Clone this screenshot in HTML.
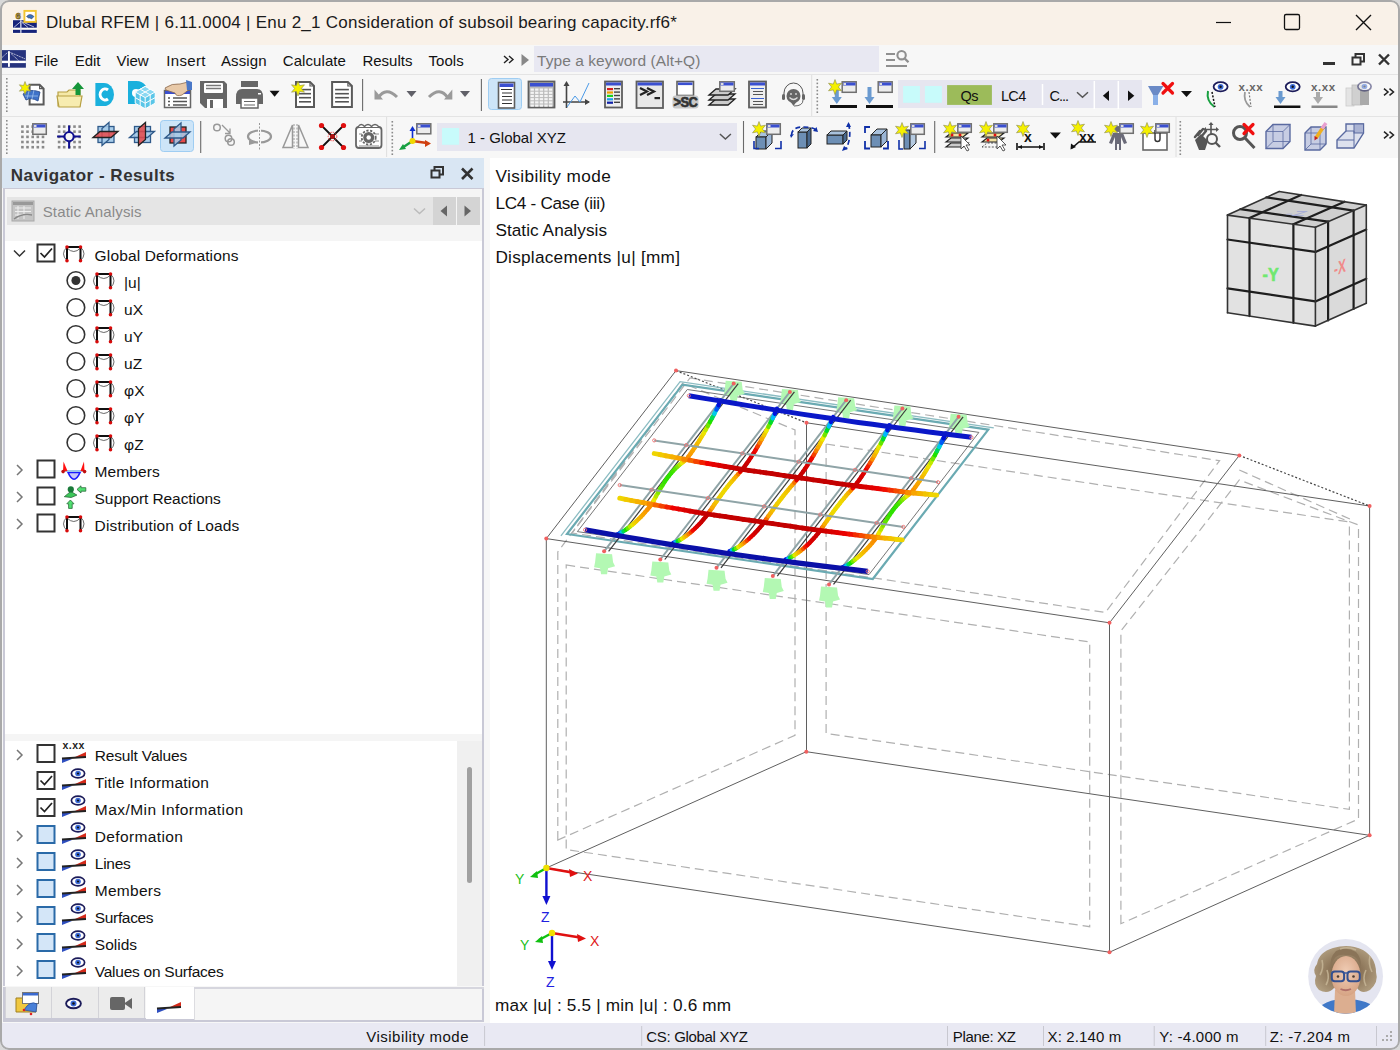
<!DOCTYPE html>
<html><head><meta charset="utf-8">
<style>
*{margin:0;padding:0;box-sizing:border-box}
html,body{width:1400px;height:1050px;overflow:hidden;background:#d9d9d9;font-family:"Liberation Sans",sans-serif;color:#111}
.a{position:absolute}
.t{position:absolute;white-space:nowrap;line-height:1}
#win{position:absolute;left:0;top:0;width:1400px;height:1050px;border-radius:9px;overflow:hidden;background:#f7f7f7}
#frame{position:absolute;left:0;top:0;width:1400px;height:1050px;border:2px solid #a9a9a9;border-radius:9px;pointer-events:none}
svg{position:absolute;left:0;top:0;overflow:visible}
</style></head><body>
<div id="win">
 <div class="a" style="left:0;top:0;width:1400px;height:45px;background:#f9f1e8"></div>
 <div class="a" style="left:0;top:74px;width:1400px;height:1px;background:#e4e4e4"></div>
 <div class="a" style="left:0;top:116px;width:1400px;height:1px;background:#e4e4e4"></div>
 <div class="a" style="left:533.7px;top:46px;width:345.3px;height:26px;background:#e8e8f2"></div>
 <div class="a" style="left:897.8px;top:80px;width:244px;height:28.4px;background:#e6e6f0"></div>
 <div class="a" style="left:437px;top:123px;width:300px;height:27.6px;background:#e6e6f0"></div>
 <!-- navigator -->
 <div class="a" style="left:0;top:157px;width:490px;height:866px;background:#f7f7f7"></div>
 <div class="a" style="left:2px;top:158px;width:482px;height:30px;background:#d9e6f3"></div>
 <div class="a" style="left:3px;top:188px;width:481px;height:798px;background:#fff;border-left:2px solid #c9c9d6;border-right:2px solid #c9c9d6;border-top:1px solid #c9c9d6"></div>
 <div class="a" style="left:5px;top:189px;width:477px;height:52px;background:#f5f5f5"></div>
 <div class="a" style="left:7px;top:197px;width:426px;height:28px;background:#e5e5e5"></div>
 <div class="a" style="left:433px;top:197px;width:23px;height:28px;background:#d4d4d4"></div>
 <div class="a" style="left:457px;top:197px;width:23px;height:28px;background:#d4d4d4"></div>
 <div class="a" style="left:5px;top:734px;width:477px;height:7px;background:#f5f5f5"></div>
 <div class="a" style="left:457px;top:741px;width:25px;height:245px;background:#f0f0f0"></div>
 <div class="a" style="left:467px;top:767px;width:5px;height:116px;background:#a0a0a0;border-radius:3px"></div>
 <div class="a" style="left:3px;top:987px;width:481px;height:35px;background:#f5f5f5;border-left:2px solid #c9c9d6;border-right:2px solid #c9c9d6"></div>
 <div class="a" style="left:4.5px;top:987px;width:47.3px;height:31px;background:#ececec;border-right:1.5px solid #d3d3d8;border-left:1px solid #d3d3d8"></div>
 <div class="a" style="left:51.8px;top:987px;width:47px;height:31px;background:#ececec;border-right:1.5px solid #d3d3d8"></div>
 <div class="a" style="left:98.8px;top:987px;width:46.7px;height:31px;background:#ececec;border-right:1px solid #d3d3d8"></div>
 <div class="a" style="left:4.5px;top:1018px;width:141px;height:2px;background:#c9c9d6"></div>
 <div class="a" style="left:145.5px;top:987px;width:48.3px;height:34px;background:#fff;border-bottom:2px solid #c9c9d6"></div>
 <div class="a" style="left:193.8px;top:987px;width:1.5px;height:34px;background:#dcdce0"></div>
 <div class="a" style="left:193.8px;top:987px;width:290px;height:1.5px;background:#d6d6de"></div>
 <div class="a" style="left:3px;top:1020px;width:481px;height:2px;background:#c9c9d6"></div>
 <!-- viewport -->
 <div class="a" style="left:490px;top:158px;width:908px;height:865px;background:#fff"></div>
 <svg width="1400" height="1050" viewBox="0 0 1400 1050">
<polygon points="566.2,565.0 1089.7,642.0 1089.7,926.7 566.2,849.6" fill="none" stroke="#b0b0b0" stroke-width="1.2" stroke-dasharray="9,5"/>
<polygon points="557.8,840.0 557.8,552.0 683.0,383.0 795.0,430.0 795.0,735.3" fill="none" stroke="#b0b0b0" stroke-width="1.2" stroke-dasharray="9,5"/>
<polygon points="1120.9,923.7 1120.9,631.0 1239.3,480.0 1358.5,525.0 1358.5,819.0" fill="none" stroke="#b0b0b0" stroke-width="1.2" stroke-dasharray="9,5"/>
<polyline points="826.1,444.0 826.1,733.4 1349.4,809.4 1349.4,522.0" fill="none" stroke="#b0b0b0" stroke-width="1.2" stroke-dasharray="9,5"/>
<polyline points="826.1,444.0 1349.4,522.0" fill="none" stroke="#b0b0b0" stroke-width="1.2" stroke-dasharray="9,5"/>
<polygon points="690.0,378.0 1219.6,460.7 1105.4,612.5 572.0,533.0" fill="none" stroke="#b0b0b0" stroke-width="1.2" stroke-dasharray="9,5"/>
<polyline points="683.0,383.0 572.0,533.0" fill="none" stroke="#b0b0b0" stroke-width="1.2" stroke-dasharray="9,5"/>
<polyline points="1239.3,470.0 1352.0,520.0" fill="none" stroke="#b0b0b0" stroke-width="1.2" stroke-dasharray="9,5"/>
<line x1="676.0" y1="370.6" x2="1239.3" y2="455.4" stroke="#5f5f5f" stroke-width="1.0" />
<line x1="546.3" y1="538.6" x2="1109.5" y2="622.8" stroke="#5f5f5f" stroke-width="1.0" />
<line x1="676.0" y1="370.6" x2="546.3" y2="538.6" stroke="#5f5f5f" stroke-width="1.0" />
<line x1="1239.3" y1="455.4" x2="1109.5" y2="622.8" stroke="#5f5f5f" stroke-width="1.0" />
<line x1="806.6" y1="422.8" x2="1369.6" y2="506.0" stroke="#5f5f5f" stroke-width="1.0" />
<line x1="546.3" y1="538.6" x2="546.3" y2="868.0" stroke="#5f5f5f" stroke-width="1.0" />
<line x1="806.5" y1="422.8" x2="806.5" y2="751.7" stroke="#5f5f5f" stroke-width="1.0" />
<line x1="1109.5" y1="622.8" x2="1109.5" y2="952.2" stroke="#5f5f5f" stroke-width="1.0" />
<line x1="1369.6" y1="506.0" x2="1369.6" y2="835.3" stroke="#5f5f5f" stroke-width="1.0" />
<line x1="546.3" y1="868.0" x2="1109.5" y2="952.2" stroke="#5f5f5f" stroke-width="1.0" />
<line x1="1109.5" y1="952.2" x2="1369.6" y2="835.3" stroke="#5f5f5f" stroke-width="1.0" />
<line x1="546.3" y1="868.0" x2="806.3" y2="751.7" stroke="#5f5f5f" stroke-width="1.0" />
<line x1="806.3" y1="751.7" x2="1369.6" y2="835.3" stroke="#5f5f5f" stroke-width="1.0" />
<line x1="676.0" y1="370.6" x2="806.6" y2="422.8" stroke="#444" stroke-width="1.2" stroke-dasharray="2,2"/>
<line x1="1239.3" y1="455.4" x2="1369.6" y2="506.0" stroke="#444" stroke-width="1.2" stroke-dasharray="2,2"/>
<polygon points="567.0,534.0 872.8,579.0 988.3,429.6 682.6,384.6" fill="none" stroke="#6aaab2" stroke-width="2.2" />
<polyline points="560.9,535.8 680.1,381.7 993.8,427.9" fill="none" stroke="#8cbcc2" stroke-width="1.3" />
<polygon points="577.4,531.6 869.0,574.6 978.9,432.4 687.3,389.5" fill="none" stroke="#666" stroke-width="0.9" />
<path d="M725.6963000000001,380.63829999999996 L741.6963000000001,381.63829999999996 L742.6963000000001,389.63829999999996 L744.6963000000001,393.63829999999996 L737.6963000000001,395.63829999999996 L736.6963000000001,401.63829999999996 L730.6963000000001,401.63829999999996 L729.6963000000001,395.63829999999996 L723.6963000000001,394.63829999999996 L724.6963000000001,389.63829999999996 Z" fill="#b3f8b3"/>
<path d="M781.9337,388.9167 L797.9337,389.9167 L798.9337,397.9167 L800.9337,401.9167 L793.9337,403.9167 L792.9337,409.9167 L786.9337,409.9167 L785.9337,403.9167 L779.9337,402.9167 L780.9337,397.9167 Z" fill="#b3f8b3"/>
<path d="M838.1711,397.1951 L854.1711,398.1951 L855.1711,406.1951 L857.1711,410.1951 L850.1711,412.1951 L849.1711,418.1951 L843.1711,418.1951 L842.1711,412.1951 L836.1711,411.1951 L837.1711,406.1951 Z" fill="#b3f8b3"/>
<path d="M894.4085000000001,405.47349999999994 L910.4085000000001,406.47349999999994 L911.4085000000001,414.47349999999994 L913.4085000000001,418.47349999999994 L906.4085000000001,420.47349999999994 L905.4085000000001,426.47349999999994 L899.4085000000001,426.47349999999994 L898.4085000000001,420.47349999999994 L892.4085000000001,419.47349999999994 L893.4085000000001,414.47349999999994 Z" fill="#b3f8b3"/>
<path d="M950.6459000000001,413.7519 L966.6459000000001,414.7519 L967.6459000000001,422.7519 L969.6459000000001,426.7519 L962.6459000000001,428.7519 L961.6459000000001,434.7519 L955.6459000000001,434.7519 L954.6459000000001,428.7519 L948.6459000000001,427.7519 L949.6459000000001,422.7519 Z" fill="#b3f8b3"/>
<line x1="733.7" y1="383.6" x2="604.1" y2="551.3" stroke="#3a3a3a" stroke-width="1.2" transform="translate(4.5,0)"/>
<line x1="733.7" y1="383.6" x2="604.1" y2="551.3" stroke="#8fa4a7" stroke-width="2.0" />
<line x1="789.9" y1="391.9" x2="660.3" y2="559.5" stroke="#3a3a3a" stroke-width="1.2" transform="translate(4.5,0)"/>
<line x1="789.9" y1="391.9" x2="660.3" y2="559.5" stroke="#8fa4a7" stroke-width="2.0" />
<line x1="846.2" y1="400.2" x2="716.5" y2="567.8" stroke="#3a3a3a" stroke-width="1.2" transform="translate(4.5,0)"/>
<line x1="846.2" y1="400.2" x2="716.5" y2="567.8" stroke="#8fa4a7" stroke-width="2.0" />
<line x1="902.4" y1="408.5" x2="772.8" y2="576.1" stroke="#3a3a3a" stroke-width="1.2" transform="translate(4.5,0)"/>
<line x1="902.4" y1="408.5" x2="772.8" y2="576.1" stroke="#8fa4a7" stroke-width="2.0" />
<line x1="958.6" y1="416.8" x2="829.0" y2="584.4" stroke="#3a3a3a" stroke-width="1.2" transform="translate(4.5,0)"/>
<line x1="958.6" y1="416.8" x2="829.0" y2="584.4" stroke="#8fa4a7" stroke-width="2.0" />
<line x1="617.0" y1="534.5" x2="619.2" y2="533.7" stroke="#000ed6" stroke-width="4.3" stroke-linecap="round"/>
<line x1="619.2" y1="533.7" x2="621.4" y2="532.5" stroke="#005af5" stroke-width="4.3" stroke-linecap="round"/>
<line x1="621.4" y1="532.5" x2="623.5" y2="531.2" stroke="#00c9ea" stroke-width="4.3" stroke-linecap="round"/>
<line x1="623.5" y1="531.2" x2="625.7" y2="529.8" stroke="#00d85b" stroke-width="4.3" stroke-linecap="round"/>
<line x1="625.7" y1="529.8" x2="627.8" y2="528.2" stroke="#1ce200" stroke-width="4.3" stroke-linecap="round"/>
<line x1="627.8" y1="528.2" x2="630.0" y2="526.6" stroke="#71e500" stroke-width="4.3" stroke-linecap="round"/>
<line x1="630.0" y1="526.6" x2="632.2" y2="524.8" stroke="#bfe900" stroke-width="4.3" stroke-linecap="round"/>
<line x1="632.2" y1="524.8" x2="634.3" y2="523.0" stroke="#ece400" stroke-width="4.3" stroke-linecap="round"/>
<line x1="634.3" y1="523.0" x2="636.5" y2="521.1" stroke="#efd300" stroke-width="4.3" stroke-linecap="round"/>
<line x1="636.5" y1="521.1" x2="638.6" y2="519.0" stroke="#f2c500" stroke-width="4.3" stroke-linecap="round"/>
<line x1="638.6" y1="519.0" x2="640.8" y2="516.9" stroke="#f5b800" stroke-width="4.3" stroke-linecap="round"/>
<line x1="640.8" y1="516.9" x2="643.0" y2="514.6" stroke="#f7ae00" stroke-width="4.3" stroke-linecap="round"/>
<line x1="643.0" y1="514.6" x2="645.1" y2="512.2" stroke="#f8a500" stroke-width="4.3" stroke-linecap="round"/>
<line x1="645.1" y1="512.2" x2="647.3" y2="509.7" stroke="#f99e00" stroke-width="4.3" stroke-linecap="round"/>
<line x1="647.3" y1="509.7" x2="649.4" y2="507.1" stroke="#f99300" stroke-width="4.3" stroke-linecap="round"/>
<line x1="649.4" y1="507.1" x2="651.6" y2="504.4" stroke="#f88d00" stroke-width="4.3" stroke-linecap="round"/>
<line x1="651.6" y1="504.4" x2="653.8" y2="500.4" stroke="#f4ba00" stroke-width="4.3" stroke-linecap="round"/>
<line x1="653.8" y1="500.4" x2="655.9" y2="496.4" stroke="#ebe700" stroke-width="4.3" stroke-linecap="round"/>
<line x1="655.9" y1="496.4" x2="658.1" y2="492.6" stroke="#b3e800" stroke-width="4.3" stroke-linecap="round"/>
<line x1="658.1" y1="492.6" x2="660.2" y2="488.9" stroke="#83e600" stroke-width="4.3" stroke-linecap="round"/>
<line x1="660.2" y1="488.9" x2="662.4" y2="485.3" stroke="#5fe500" stroke-width="4.3" stroke-linecap="round"/>
<line x1="662.4" y1="485.3" x2="664.6" y2="481.9" stroke="#46e300" stroke-width="4.3" stroke-linecap="round"/>
<line x1="664.6" y1="481.9" x2="666.7" y2="478.8" stroke="#36e300" stroke-width="4.3" stroke-linecap="round"/>
<line x1="666.7" y1="478.8" x2="668.9" y2="475.9" stroke="#2ee200" stroke-width="4.3" stroke-linecap="round"/>
<line x1="668.9" y1="475.9" x2="671.0" y2="473.2" stroke="#2ee200" stroke-width="4.3" stroke-linecap="round"/>
<line x1="671.0" y1="473.2" x2="673.2" y2="470.8" stroke="#36e300" stroke-width="4.3" stroke-linecap="round"/>
<line x1="673.2" y1="470.8" x2="675.4" y2="468.5" stroke="#46e300" stroke-width="4.3" stroke-linecap="round"/>
<line x1="675.4" y1="468.5" x2="677.5" y2="466.5" stroke="#5fe500" stroke-width="4.3" stroke-linecap="round"/>
<line x1="677.5" y1="466.5" x2="679.7" y2="464.6" stroke="#83e600" stroke-width="4.3" stroke-linecap="round"/>
<line x1="679.7" y1="464.6" x2="681.8" y2="462.9" stroke="#b3e800" stroke-width="4.3" stroke-linecap="round"/>
<line x1="681.8" y1="462.9" x2="684.0" y2="461.3" stroke="#ebe700" stroke-width="4.3" stroke-linecap="round"/>
<line x1="684.0" y1="461.3" x2="686.2" y2="459.7" stroke="#f4ba00" stroke-width="4.3" stroke-linecap="round"/>
<line x1="686.2" y1="459.7" x2="688.3" y2="456.8" stroke="#f88d00" stroke-width="4.3" stroke-linecap="round"/>
<line x1="688.3" y1="456.8" x2="690.5" y2="453.8" stroke="#f99300" stroke-width="4.3" stroke-linecap="round"/>
<line x1="690.5" y1="453.8" x2="692.6" y2="450.7" stroke="#f99e00" stroke-width="4.3" stroke-linecap="round"/>
<line x1="692.6" y1="450.7" x2="694.8" y2="447.5" stroke="#f8a500" stroke-width="4.3" stroke-linecap="round"/>
<line x1="694.8" y1="447.5" x2="697.0" y2="444.2" stroke="#f7ae00" stroke-width="4.3" stroke-linecap="round"/>
<line x1="697.0" y1="444.2" x2="699.1" y2="440.8" stroke="#f5b800" stroke-width="4.3" stroke-linecap="round"/>
<line x1="699.1" y1="440.8" x2="701.3" y2="437.2" stroke="#f2c500" stroke-width="4.3" stroke-linecap="round"/>
<line x1="701.3" y1="437.2" x2="703.5" y2="433.6" stroke="#efd300" stroke-width="4.3" stroke-linecap="round"/>
<line x1="703.5" y1="433.6" x2="705.6" y2="429.8" stroke="#ece400" stroke-width="4.3" stroke-linecap="round"/>
<line x1="705.6" y1="429.8" x2="707.8" y2="426.0" stroke="#bfe900" stroke-width="4.3" stroke-linecap="round"/>
<line x1="707.8" y1="426.0" x2="709.9" y2="422.1" stroke="#71e500" stroke-width="4.3" stroke-linecap="round"/>
<line x1="709.9" y1="422.1" x2="712.1" y2="418.0" stroke="#1ce200" stroke-width="4.3" stroke-linecap="round"/>
<line x1="712.1" y1="418.0" x2="714.3" y2="413.9" stroke="#00d85b" stroke-width="4.3" stroke-linecap="round"/>
<line x1="714.3" y1="413.9" x2="716.4" y2="409.6" stroke="#00c9ea" stroke-width="4.3" stroke-linecap="round"/>
<line x1="716.4" y1="409.6" x2="718.6" y2="405.2" stroke="#005af5" stroke-width="4.3" stroke-linecap="round"/>
<line x1="718.6" y1="405.2" x2="720.7" y2="400.4" stroke="#000ed6" stroke-width="4.3" stroke-linecap="round"/>
<line x1="673.3" y1="542.8" x2="675.4" y2="542.2" stroke="#0014e0" stroke-width="4.3" stroke-linecap="round"/>
<line x1="675.4" y1="542.2" x2="677.6" y2="541.2" stroke="#00bdfe" stroke-width="4.3" stroke-linecap="round"/>
<line x1="677.6" y1="541.2" x2="679.8" y2="540.0" stroke="#00dc2b" stroke-width="4.3" stroke-linecap="round"/>
<line x1="679.8" y1="540.0" x2="681.9" y2="538.7" stroke="#6fe500" stroke-width="4.3" stroke-linecap="round"/>
<line x1="681.9" y1="538.7" x2="684.1" y2="537.3" stroke="#ebe900" stroke-width="4.3" stroke-linecap="round"/>
<line x1="684.1" y1="537.3" x2="686.2" y2="535.7" stroke="#f1ca00" stroke-width="4.3" stroke-linecap="round"/>
<line x1="686.2" y1="535.7" x2="688.4" y2="534.1" stroke="#f7ad00" stroke-width="4.3" stroke-linecap="round"/>
<line x1="688.4" y1="534.1" x2="690.6" y2="532.3" stroke="#f77f00" stroke-width="4.3" stroke-linecap="round"/>
<line x1="690.6" y1="532.3" x2="692.7" y2="530.5" stroke="#f44100" stroke-width="4.3" stroke-linecap="round"/>
<line x1="692.7" y1="530.5" x2="694.9" y2="528.5" stroke="#f00a00" stroke-width="4.3" stroke-linecap="round"/>
<line x1="694.9" y1="528.5" x2="697.0" y2="526.4" stroke="#e50000" stroke-width="4.3" stroke-linecap="round"/>
<line x1="697.0" y1="526.4" x2="699.2" y2="524.2" stroke="#da0000" stroke-width="4.3" stroke-linecap="round"/>
<line x1="699.2" y1="524.2" x2="701.4" y2="521.9" stroke="#d10000" stroke-width="4.3" stroke-linecap="round"/>
<line x1="701.4" y1="521.9" x2="703.5" y2="519.4" stroke="#ca0000" stroke-width="4.3" stroke-linecap="round"/>
<line x1="703.5" y1="519.4" x2="705.7" y2="516.8" stroke="#c50000" stroke-width="4.3" stroke-linecap="round"/>
<line x1="705.7" y1="516.8" x2="707.8" y2="514.1" stroke="#c30000" stroke-width="4.3" stroke-linecap="round"/>
<line x1="707.8" y1="514.1" x2="710.0" y2="510.9" stroke="#e50000" stroke-width="4.3" stroke-linecap="round"/>
<line x1="710.0" y1="510.9" x2="712.2" y2="507.7" stroke="#f77a00" stroke-width="4.3" stroke-linecap="round"/>
<line x1="712.2" y1="507.7" x2="714.3" y2="504.5" stroke="#f8a900" stroke-width="4.3" stroke-linecap="round"/>
<line x1="714.3" y1="504.5" x2="716.5" y2="501.4" stroke="#f4ba00" stroke-width="4.3" stroke-linecap="round"/>
<line x1="716.5" y1="501.4" x2="718.6" y2="498.4" stroke="#f2c600" stroke-width="4.3" stroke-linecap="round"/>
<line x1="718.6" y1="498.4" x2="720.8" y2="495.4" stroke="#f0cf00" stroke-width="4.3" stroke-linecap="round"/>
<line x1="720.8" y1="495.4" x2="723.0" y2="492.5" stroke="#efd400" stroke-width="4.3" stroke-linecap="round"/>
<line x1="723.0" y1="492.5" x2="725.1" y2="489.6" stroke="#eed700" stroke-width="4.3" stroke-linecap="round"/>
<line x1="725.1" y1="489.6" x2="727.3" y2="486.9" stroke="#eed700" stroke-width="4.3" stroke-linecap="round"/>
<line x1="727.3" y1="486.9" x2="729.4" y2="484.2" stroke="#efd400" stroke-width="4.3" stroke-linecap="round"/>
<line x1="729.4" y1="484.2" x2="731.6" y2="481.6" stroke="#f0cf00" stroke-width="4.3" stroke-linecap="round"/>
<line x1="731.6" y1="481.6" x2="733.8" y2="479.1" stroke="#f2c600" stroke-width="4.3" stroke-linecap="round"/>
<line x1="733.8" y1="479.1" x2="735.9" y2="476.6" stroke="#f4ba00" stroke-width="4.3" stroke-linecap="round"/>
<line x1="735.9" y1="476.6" x2="738.1" y2="474.2" stroke="#f8a900" stroke-width="4.3" stroke-linecap="round"/>
<line x1="738.1" y1="474.2" x2="740.2" y2="471.8" stroke="#f77a00" stroke-width="4.3" stroke-linecap="round"/>
<line x1="740.2" y1="471.8" x2="742.4" y2="469.4" stroke="#e50000" stroke-width="4.3" stroke-linecap="round"/>
<line x1="742.4" y1="469.4" x2="744.6" y2="466.5" stroke="#c30000" stroke-width="4.3" stroke-linecap="round"/>
<line x1="744.6" y1="466.5" x2="746.7" y2="463.5" stroke="#c50000" stroke-width="4.3" stroke-linecap="round"/>
<line x1="746.7" y1="463.5" x2="748.9" y2="460.4" stroke="#ca0000" stroke-width="4.3" stroke-linecap="round"/>
<line x1="748.9" y1="460.4" x2="751.0" y2="457.2" stroke="#d10000" stroke-width="4.3" stroke-linecap="round"/>
<line x1="751.0" y1="457.2" x2="753.2" y2="453.8" stroke="#da0000" stroke-width="4.3" stroke-linecap="round"/>
<line x1="753.2" y1="453.8" x2="755.4" y2="450.3" stroke="#e50000" stroke-width="4.3" stroke-linecap="round"/>
<line x1="755.4" y1="450.3" x2="757.5" y2="446.7" stroke="#f00a00" stroke-width="4.3" stroke-linecap="round"/>
<line x1="757.5" y1="446.7" x2="759.7" y2="442.9" stroke="#f44100" stroke-width="4.3" stroke-linecap="round"/>
<line x1="759.7" y1="442.9" x2="761.8" y2="439.1" stroke="#f77f00" stroke-width="4.3" stroke-linecap="round"/>
<line x1="761.8" y1="439.1" x2="764.0" y2="435.2" stroke="#f7ad00" stroke-width="4.3" stroke-linecap="round"/>
<line x1="764.0" y1="435.2" x2="766.2" y2="431.1" stroke="#f1ca00" stroke-width="4.3" stroke-linecap="round"/>
<line x1="766.2" y1="431.1" x2="768.3" y2="426.9" stroke="#ebe900" stroke-width="4.3" stroke-linecap="round"/>
<line x1="768.3" y1="426.9" x2="770.5" y2="422.7" stroke="#6fe500" stroke-width="4.3" stroke-linecap="round"/>
<line x1="770.5" y1="422.7" x2="772.7" y2="418.3" stroke="#00dc2b" stroke-width="4.3" stroke-linecap="round"/>
<line x1="772.7" y1="418.3" x2="774.8" y2="413.7" stroke="#00bdfe" stroke-width="4.3" stroke-linecap="round"/>
<line x1="774.8" y1="413.7" x2="777.0" y2="408.7" stroke="#0014e0" stroke-width="4.3" stroke-linecap="round"/>
<line x1="729.5" y1="551.1" x2="731.7" y2="550.5" stroke="#0014e0" stroke-width="4.3" stroke-linecap="round"/>
<line x1="731.7" y1="550.5" x2="733.8" y2="549.5" stroke="#00bdfe" stroke-width="4.3" stroke-linecap="round"/>
<line x1="733.8" y1="549.5" x2="736.0" y2="548.3" stroke="#00dc2b" stroke-width="4.3" stroke-linecap="round"/>
<line x1="736.0" y1="548.3" x2="738.2" y2="547.0" stroke="#6fe500" stroke-width="4.3" stroke-linecap="round"/>
<line x1="738.2" y1="547.0" x2="740.3" y2="545.5" stroke="#ebe900" stroke-width="4.3" stroke-linecap="round"/>
<line x1="740.3" y1="545.5" x2="742.5" y2="544.0" stroke="#f1ca00" stroke-width="4.3" stroke-linecap="round"/>
<line x1="742.5" y1="544.0" x2="744.6" y2="542.4" stroke="#f7ad00" stroke-width="4.3" stroke-linecap="round"/>
<line x1="744.6" y1="542.4" x2="746.8" y2="540.6" stroke="#f77f00" stroke-width="4.3" stroke-linecap="round"/>
<line x1="746.8" y1="540.6" x2="749.0" y2="538.8" stroke="#f44100" stroke-width="4.3" stroke-linecap="round"/>
<line x1="749.0" y1="538.8" x2="751.1" y2="536.8" stroke="#f00a00" stroke-width="4.3" stroke-linecap="round"/>
<line x1="751.1" y1="536.8" x2="753.3" y2="534.7" stroke="#e50000" stroke-width="4.3" stroke-linecap="round"/>
<line x1="753.3" y1="534.7" x2="755.4" y2="532.5" stroke="#da0000" stroke-width="4.3" stroke-linecap="round"/>
<line x1="755.4" y1="532.5" x2="757.6" y2="530.2" stroke="#d10000" stroke-width="4.3" stroke-linecap="round"/>
<line x1="757.6" y1="530.2" x2="759.8" y2="527.7" stroke="#ca0000" stroke-width="4.3" stroke-linecap="round"/>
<line x1="759.8" y1="527.7" x2="761.9" y2="525.1" stroke="#c50000" stroke-width="4.3" stroke-linecap="round"/>
<line x1="761.9" y1="525.1" x2="764.1" y2="522.4" stroke="#c30000" stroke-width="4.3" stroke-linecap="round"/>
<line x1="764.1" y1="522.4" x2="766.2" y2="519.2" stroke="#e30000" stroke-width="4.3" stroke-linecap="round"/>
<line x1="766.2" y1="519.2" x2="768.4" y2="516.1" stroke="#f66e00" stroke-width="4.3" stroke-linecap="round"/>
<line x1="768.4" y1="516.1" x2="770.6" y2="513.1" stroke="#f9a400" stroke-width="4.3" stroke-linecap="round"/>
<line x1="770.6" y1="513.1" x2="772.7" y2="510.0" stroke="#f5b400" stroke-width="4.3" stroke-linecap="round"/>
<line x1="772.7" y1="510.0" x2="774.9" y2="507.0" stroke="#f3c000" stroke-width="4.3" stroke-linecap="round"/>
<line x1="774.9" y1="507.0" x2="777.0" y2="504.1" stroke="#f1c800" stroke-width="4.3" stroke-linecap="round"/>
<line x1="777.0" y1="504.1" x2="779.2" y2="501.2" stroke="#f0cd00" stroke-width="4.3" stroke-linecap="round"/>
<line x1="779.2" y1="501.2" x2="781.4" y2="498.4" stroke="#f0d000" stroke-width="4.3" stroke-linecap="round"/>
<line x1="781.4" y1="498.4" x2="783.5" y2="495.6" stroke="#f0d000" stroke-width="4.3" stroke-linecap="round"/>
<line x1="783.5" y1="495.6" x2="785.7" y2="492.9" stroke="#f0cd00" stroke-width="4.3" stroke-linecap="round"/>
<line x1="785.7" y1="492.9" x2="787.8" y2="490.3" stroke="#f1c800" stroke-width="4.3" stroke-linecap="round"/>
<line x1="787.8" y1="490.3" x2="790.0" y2="487.7" stroke="#f3c000" stroke-width="4.3" stroke-linecap="round"/>
<line x1="790.0" y1="487.7" x2="792.2" y2="485.1" stroke="#f5b400" stroke-width="4.3" stroke-linecap="round"/>
<line x1="792.2" y1="485.1" x2="794.3" y2="482.6" stroke="#f9a400" stroke-width="4.3" stroke-linecap="round"/>
<line x1="794.3" y1="482.6" x2="796.5" y2="480.1" stroke="#f66e00" stroke-width="4.3" stroke-linecap="round"/>
<line x1="796.5" y1="480.1" x2="798.6" y2="477.7" stroke="#e30000" stroke-width="4.3" stroke-linecap="round"/>
<line x1="798.6" y1="477.7" x2="800.8" y2="474.8" stroke="#c30000" stroke-width="4.3" stroke-linecap="round"/>
<line x1="800.8" y1="474.8" x2="803.0" y2="471.8" stroke="#c50000" stroke-width="4.3" stroke-linecap="round"/>
<line x1="803.0" y1="471.8" x2="805.1" y2="468.7" stroke="#ca0000" stroke-width="4.3" stroke-linecap="round"/>
<line x1="805.1" y1="468.7" x2="807.3" y2="465.4" stroke="#d10000" stroke-width="4.3" stroke-linecap="round"/>
<line x1="807.3" y1="465.4" x2="809.4" y2="462.1" stroke="#da0000" stroke-width="4.3" stroke-linecap="round"/>
<line x1="809.4" y1="462.1" x2="811.6" y2="458.6" stroke="#e50000" stroke-width="4.3" stroke-linecap="round"/>
<line x1="811.6" y1="458.6" x2="813.8" y2="455.0" stroke="#f00a00" stroke-width="4.3" stroke-linecap="round"/>
<line x1="813.8" y1="455.0" x2="815.9" y2="451.2" stroke="#f44100" stroke-width="4.3" stroke-linecap="round"/>
<line x1="815.9" y1="451.2" x2="818.1" y2="447.4" stroke="#f77f00" stroke-width="4.3" stroke-linecap="round"/>
<line x1="818.1" y1="447.4" x2="820.2" y2="443.4" stroke="#f7ad00" stroke-width="4.3" stroke-linecap="round"/>
<line x1="820.2" y1="443.4" x2="822.4" y2="439.4" stroke="#f1ca00" stroke-width="4.3" stroke-linecap="round"/>
<line x1="822.4" y1="439.4" x2="824.6" y2="435.2" stroke="#ebe900" stroke-width="4.3" stroke-linecap="round"/>
<line x1="824.6" y1="435.2" x2="826.7" y2="430.9" stroke="#6fe500" stroke-width="4.3" stroke-linecap="round"/>
<line x1="826.7" y1="430.9" x2="828.9" y2="426.5" stroke="#00dc2b" stroke-width="4.3" stroke-linecap="round"/>
<line x1="828.9" y1="426.5" x2="831.0" y2="422.0" stroke="#00bdfe" stroke-width="4.3" stroke-linecap="round"/>
<line x1="831.0" y1="422.0" x2="833.2" y2="417.0" stroke="#0014e0" stroke-width="4.3" stroke-linecap="round"/>
<line x1="785.7" y1="559.3" x2="787.9" y2="558.7" stroke="#0014df" stroke-width="4.3" stroke-linecap="round"/>
<line x1="787.9" y1="558.7" x2="790.1" y2="557.7" stroke="#00b6fd" stroke-width="4.3" stroke-linecap="round"/>
<line x1="790.1" y1="557.7" x2="792.2" y2="556.5" stroke="#00db3a" stroke-width="4.3" stroke-linecap="round"/>
<line x1="792.2" y1="556.5" x2="794.4" y2="555.2" stroke="#61e500" stroke-width="4.3" stroke-linecap="round"/>
<line x1="794.4" y1="555.2" x2="796.5" y2="553.7" stroke="#e1ea00" stroke-width="4.3" stroke-linecap="round"/>
<line x1="796.5" y1="553.7" x2="798.7" y2="552.2" stroke="#f0cf00" stroke-width="4.3" stroke-linecap="round"/>
<line x1="798.7" y1="552.2" x2="800.9" y2="550.6" stroke="#f6b300" stroke-width="4.3" stroke-linecap="round"/>
<line x1="800.9" y1="550.6" x2="803.0" y2="548.8" stroke="#f99000" stroke-width="4.3" stroke-linecap="round"/>
<line x1="803.0" y1="548.8" x2="805.2" y2="546.9" stroke="#f55300" stroke-width="4.3" stroke-linecap="round"/>
<line x1="805.2" y1="546.9" x2="807.4" y2="545.0" stroke="#f11e00" stroke-width="4.3" stroke-linecap="round"/>
<line x1="807.4" y1="545.0" x2="809.5" y2="542.9" stroke="#eb0000" stroke-width="4.3" stroke-linecap="round"/>
<line x1="809.5" y1="542.9" x2="811.7" y2="540.6" stroke="#e00000" stroke-width="4.3" stroke-linecap="round"/>
<line x1="811.7" y1="540.6" x2="813.8" y2="538.3" stroke="#d70000" stroke-width="4.3" stroke-linecap="round"/>
<line x1="813.8" y1="538.3" x2="816.0" y2="535.8" stroke="#d00000" stroke-width="4.3" stroke-linecap="round"/>
<line x1="816.0" y1="535.8" x2="818.2" y2="533.2" stroke="#cc0000" stroke-width="4.3" stroke-linecap="round"/>
<line x1="818.2" y1="533.2" x2="820.3" y2="530.5" stroke="#ca0000" stroke-width="4.3" stroke-linecap="round"/>
<line x1="820.3" y1="530.5" x2="822.5" y2="527.3" stroke="#eb0000" stroke-width="4.3" stroke-linecap="round"/>
<line x1="822.5" y1="527.3" x2="824.6" y2="524.1" stroke="#f88b00" stroke-width="4.3" stroke-linecap="round"/>
<line x1="824.6" y1="524.1" x2="826.8" y2="521.0" stroke="#f6af00" stroke-width="4.3" stroke-linecap="round"/>
<line x1="826.8" y1="521.0" x2="829.0" y2="517.9" stroke="#f3bf00" stroke-width="4.3" stroke-linecap="round"/>
<line x1="829.0" y1="517.9" x2="831.1" y2="514.8" stroke="#f1cb00" stroke-width="4.3" stroke-linecap="round"/>
<line x1="831.1" y1="514.8" x2="833.3" y2="511.8" stroke="#efd400" stroke-width="4.3" stroke-linecap="round"/>
<line x1="833.3" y1="511.8" x2="835.4" y2="508.9" stroke="#eed900" stroke-width="4.3" stroke-linecap="round"/>
<line x1="835.4" y1="508.9" x2="837.6" y2="506.1" stroke="#eddc00" stroke-width="4.3" stroke-linecap="round"/>
<line x1="837.6" y1="506.1" x2="839.8" y2="503.3" stroke="#eddc00" stroke-width="4.3" stroke-linecap="round"/>
<line x1="839.8" y1="503.3" x2="841.9" y2="500.7" stroke="#eed900" stroke-width="4.3" stroke-linecap="round"/>
<line x1="841.9" y1="500.7" x2="844.1" y2="498.1" stroke="#efd400" stroke-width="4.3" stroke-linecap="round"/>
<line x1="844.1" y1="498.1" x2="846.2" y2="495.5" stroke="#f1cb00" stroke-width="4.3" stroke-linecap="round"/>
<line x1="846.2" y1="495.5" x2="848.4" y2="493.0" stroke="#f3bf00" stroke-width="4.3" stroke-linecap="round"/>
<line x1="848.4" y1="493.0" x2="850.6" y2="490.6" stroke="#f6af00" stroke-width="4.3" stroke-linecap="round"/>
<line x1="850.6" y1="490.6" x2="852.7" y2="488.2" stroke="#f88b00" stroke-width="4.3" stroke-linecap="round"/>
<line x1="852.7" y1="488.2" x2="854.9" y2="485.8" stroke="#eb0000" stroke-width="4.3" stroke-linecap="round"/>
<line x1="854.9" y1="485.8" x2="857.0" y2="482.9" stroke="#ca0000" stroke-width="4.3" stroke-linecap="round"/>
<line x1="857.0" y1="482.9" x2="859.2" y2="480.0" stroke="#cc0000" stroke-width="4.3" stroke-linecap="round"/>
<line x1="859.2" y1="480.0" x2="861.4" y2="476.8" stroke="#d00000" stroke-width="4.3" stroke-linecap="round"/>
<line x1="861.4" y1="476.8" x2="863.5" y2="473.6" stroke="#d70000" stroke-width="4.3" stroke-linecap="round"/>
<line x1="863.5" y1="473.6" x2="865.7" y2="470.2" stroke="#e00000" stroke-width="4.3" stroke-linecap="round"/>
<line x1="865.7" y1="470.2" x2="867.8" y2="466.7" stroke="#eb0000" stroke-width="4.3" stroke-linecap="round"/>
<line x1="867.8" y1="466.7" x2="870.0" y2="463.1" stroke="#f11e00" stroke-width="4.3" stroke-linecap="round"/>
<line x1="870.0" y1="463.1" x2="872.2" y2="459.4" stroke="#f55300" stroke-width="4.3" stroke-linecap="round"/>
<line x1="872.2" y1="459.4" x2="874.3" y2="455.6" stroke="#f99000" stroke-width="4.3" stroke-linecap="round"/>
<line x1="874.3" y1="455.6" x2="876.5" y2="451.6" stroke="#f6b300" stroke-width="4.3" stroke-linecap="round"/>
<line x1="876.5" y1="451.6" x2="878.6" y2="447.6" stroke="#f0cf00" stroke-width="4.3" stroke-linecap="round"/>
<line x1="878.6" y1="447.6" x2="880.8" y2="443.4" stroke="#e1ea00" stroke-width="4.3" stroke-linecap="round"/>
<line x1="880.8" y1="443.4" x2="883.0" y2="439.2" stroke="#61e500" stroke-width="4.3" stroke-linecap="round"/>
<line x1="883.0" y1="439.2" x2="885.1" y2="434.8" stroke="#00db3a" stroke-width="4.3" stroke-linecap="round"/>
<line x1="885.1" y1="434.8" x2="887.3" y2="430.2" stroke="#00b6fd" stroke-width="4.3" stroke-linecap="round"/>
<line x1="887.3" y1="430.2" x2="889.4" y2="425.2" stroke="#0014df" stroke-width="4.3" stroke-linecap="round"/>
<line x1="842.0" y1="567.6" x2="844.1" y2="566.8" stroke="#000ed6" stroke-width="4.3" stroke-linecap="round"/>
<line x1="844.1" y1="566.8" x2="846.3" y2="565.7" stroke="#005af5" stroke-width="4.3" stroke-linecap="round"/>
<line x1="846.3" y1="565.7" x2="848.5" y2="564.3" stroke="#00c9ea" stroke-width="4.3" stroke-linecap="round"/>
<line x1="848.5" y1="564.3" x2="850.6" y2="562.9" stroke="#00d85b" stroke-width="4.3" stroke-linecap="round"/>
<line x1="850.6" y1="562.9" x2="852.8" y2="561.3" stroke="#1ce200" stroke-width="4.3" stroke-linecap="round"/>
<line x1="852.8" y1="561.3" x2="854.9" y2="559.7" stroke="#71e500" stroke-width="4.3" stroke-linecap="round"/>
<line x1="854.9" y1="559.7" x2="857.1" y2="557.9" stroke="#bfe900" stroke-width="4.3" stroke-linecap="round"/>
<line x1="857.1" y1="557.9" x2="859.3" y2="556.1" stroke="#ece400" stroke-width="4.3" stroke-linecap="round"/>
<line x1="859.3" y1="556.1" x2="861.4" y2="554.2" stroke="#efd300" stroke-width="4.3" stroke-linecap="round"/>
<line x1="861.4" y1="554.2" x2="863.6" y2="552.1" stroke="#f2c500" stroke-width="4.3" stroke-linecap="round"/>
<line x1="863.6" y1="552.1" x2="865.7" y2="550.0" stroke="#f5b800" stroke-width="4.3" stroke-linecap="round"/>
<line x1="865.7" y1="550.0" x2="867.9" y2="547.7" stroke="#f7ae00" stroke-width="4.3" stroke-linecap="round"/>
<line x1="867.9" y1="547.7" x2="870.1" y2="545.3" stroke="#f8a500" stroke-width="4.3" stroke-linecap="round"/>
<line x1="870.1" y1="545.3" x2="872.2" y2="542.8" stroke="#f99e00" stroke-width="4.3" stroke-linecap="round"/>
<line x1="872.2" y1="542.8" x2="874.4" y2="540.2" stroke="#f99300" stroke-width="4.3" stroke-linecap="round"/>
<line x1="874.4" y1="540.2" x2="876.6" y2="537.5" stroke="#f88d00" stroke-width="4.3" stroke-linecap="round"/>
<line x1="876.6" y1="537.5" x2="878.7" y2="533.5" stroke="#f4ba00" stroke-width="4.3" stroke-linecap="round"/>
<line x1="878.7" y1="533.5" x2="880.9" y2="529.5" stroke="#ebe700" stroke-width="4.3" stroke-linecap="round"/>
<line x1="880.9" y1="529.5" x2="883.0" y2="525.7" stroke="#b3e800" stroke-width="4.3" stroke-linecap="round"/>
<line x1="883.0" y1="525.7" x2="885.2" y2="522.0" stroke="#83e600" stroke-width="4.3" stroke-linecap="round"/>
<line x1="885.2" y1="522.0" x2="887.4" y2="518.4" stroke="#5fe500" stroke-width="4.3" stroke-linecap="round"/>
<line x1="887.4" y1="518.4" x2="889.5" y2="515.1" stroke="#46e300" stroke-width="4.3" stroke-linecap="round"/>
<line x1="889.5" y1="515.1" x2="891.7" y2="511.9" stroke="#36e300" stroke-width="4.3" stroke-linecap="round"/>
<line x1="891.7" y1="511.9" x2="893.8" y2="509.0" stroke="#2ee200" stroke-width="4.3" stroke-linecap="round"/>
<line x1="893.8" y1="509.0" x2="896.0" y2="506.3" stroke="#2ee200" stroke-width="4.3" stroke-linecap="round"/>
<line x1="896.0" y1="506.3" x2="898.2" y2="503.9" stroke="#36e300" stroke-width="4.3" stroke-linecap="round"/>
<line x1="898.2" y1="503.9" x2="900.3" y2="501.7" stroke="#46e300" stroke-width="4.3" stroke-linecap="round"/>
<line x1="900.3" y1="501.7" x2="902.5" y2="499.6" stroke="#5fe500" stroke-width="4.3" stroke-linecap="round"/>
<line x1="902.5" y1="499.6" x2="904.6" y2="497.8" stroke="#83e600" stroke-width="4.3" stroke-linecap="round"/>
<line x1="904.6" y1="497.8" x2="906.8" y2="496.0" stroke="#b3e800" stroke-width="4.3" stroke-linecap="round"/>
<line x1="906.8" y1="496.0" x2="909.0" y2="494.4" stroke="#ebe700" stroke-width="4.3" stroke-linecap="round"/>
<line x1="909.0" y1="494.4" x2="911.1" y2="492.8" stroke="#f4ba00" stroke-width="4.3" stroke-linecap="round"/>
<line x1="911.1" y1="492.8" x2="913.3" y2="489.9" stroke="#f88d00" stroke-width="4.3" stroke-linecap="round"/>
<line x1="913.3" y1="489.9" x2="915.4" y2="486.9" stroke="#f99300" stroke-width="4.3" stroke-linecap="round"/>
<line x1="915.4" y1="486.9" x2="917.6" y2="483.9" stroke="#f99e00" stroke-width="4.3" stroke-linecap="round"/>
<line x1="917.6" y1="483.9" x2="919.8" y2="480.7" stroke="#f8a500" stroke-width="4.3" stroke-linecap="round"/>
<line x1="919.8" y1="480.7" x2="921.9" y2="477.3" stroke="#f7ae00" stroke-width="4.3" stroke-linecap="round"/>
<line x1="921.9" y1="477.3" x2="924.1" y2="473.9" stroke="#f5b800" stroke-width="4.3" stroke-linecap="round"/>
<line x1="924.1" y1="473.9" x2="926.2" y2="470.4" stroke="#f2c500" stroke-width="4.3" stroke-linecap="round"/>
<line x1="926.2" y1="470.4" x2="928.4" y2="466.7" stroke="#efd300" stroke-width="4.3" stroke-linecap="round"/>
<line x1="928.4" y1="466.7" x2="930.6" y2="463.0" stroke="#ece400" stroke-width="4.3" stroke-linecap="round"/>
<line x1="930.6" y1="463.0" x2="932.7" y2="459.1" stroke="#bfe900" stroke-width="4.3" stroke-linecap="round"/>
<line x1="932.7" y1="459.1" x2="934.9" y2="455.2" stroke="#71e500" stroke-width="4.3" stroke-linecap="round"/>
<line x1="934.9" y1="455.2" x2="937.0" y2="451.1" stroke="#1ce200" stroke-width="4.3" stroke-linecap="round"/>
<line x1="937.0" y1="451.1" x2="939.2" y2="447.0" stroke="#00d85b" stroke-width="4.3" stroke-linecap="round"/>
<line x1="939.2" y1="447.0" x2="941.4" y2="442.7" stroke="#00c9ea" stroke-width="4.3" stroke-linecap="round"/>
<line x1="941.4" y1="442.7" x2="943.5" y2="438.3" stroke="#005af5" stroke-width="4.3" stroke-linecap="round"/>
<line x1="943.5" y1="438.3" x2="945.7" y2="433.5" stroke="#000ed6" stroke-width="4.3" stroke-linecap="round"/>
<line x1="619.7" y1="498.2" x2="625.6" y2="499.4" stroke="#efd500" stroke-width="4.8" stroke-linecap="round"/>
<line x1="625.6" y1="499.4" x2="631.4" y2="500.5" stroke="#f1c900" stroke-width="4.8" stroke-linecap="round"/>
<line x1="631.4" y1="500.5" x2="637.3" y2="501.6" stroke="#f4bc00" stroke-width="4.8" stroke-linecap="round"/>
<line x1="637.3" y1="501.6" x2="643.2" y2="502.7" stroke="#f6b000" stroke-width="4.8" stroke-linecap="round"/>
<line x1="643.2" y1="502.7" x2="649.1" y2="503.9" stroke="#f9a300" stroke-width="4.8" stroke-linecap="round"/>
<line x1="649.1" y1="503.9" x2="655.0" y2="504.9" stroke="#f88800" stroke-width="4.8" stroke-linecap="round"/>
<line x1="655.0" y1="504.9" x2="660.9" y2="506.0" stroke="#f66600" stroke-width="4.8" stroke-linecap="round"/>
<line x1="660.9" y1="506.0" x2="666.8" y2="507.0" stroke="#f44300" stroke-width="4.8" stroke-linecap="round"/>
<line x1="666.8" y1="507.0" x2="672.7" y2="508.0" stroke="#f22000" stroke-width="4.8" stroke-linecap="round"/>
<line x1="672.7" y1="508.0" x2="678.5" y2="509.0" stroke="#ef0000" stroke-width="4.8" stroke-linecap="round"/>
<line x1="678.5" y1="509.0" x2="684.4" y2="510.0" stroke="#e50000" stroke-width="4.8" stroke-linecap="round"/>
<line x1="684.4" y1="510.0" x2="690.3" y2="511.1" stroke="#db0000" stroke-width="4.8" stroke-linecap="round"/>
<line x1="690.3" y1="511.1" x2="696.2" y2="512.1" stroke="#d30000" stroke-width="4.8" stroke-linecap="round"/>
<line x1="696.2" y1="512.1" x2="702.1" y2="513.1" stroke="#cc0000" stroke-width="4.8" stroke-linecap="round"/>
<line x1="702.1" y1="513.1" x2="708.0" y2="514.1" stroke="#c60000" stroke-width="4.8" stroke-linecap="round"/>
<line x1="708.0" y1="514.1" x2="713.9" y2="515.0" stroke="#c30000" stroke-width="4.8" stroke-linecap="round"/>
<line x1="713.9" y1="515.0" x2="719.8" y2="515.8" stroke="#c30000" stroke-width="4.8" stroke-linecap="round"/>
<line x1="719.8" y1="515.8" x2="725.6" y2="516.7" stroke="#c30000" stroke-width="4.8" stroke-linecap="round"/>
<line x1="725.6" y1="516.7" x2="731.5" y2="517.6" stroke="#c30000" stroke-width="4.8" stroke-linecap="round"/>
<line x1="731.5" y1="517.6" x2="737.4" y2="518.4" stroke="#c30000" stroke-width="4.8" stroke-linecap="round"/>
<line x1="737.4" y1="518.4" x2="743.3" y2="519.3" stroke="#c30000" stroke-width="4.8" stroke-linecap="round"/>
<line x1="743.3" y1="519.3" x2="749.2" y2="520.2" stroke="#c30000" stroke-width="4.8" stroke-linecap="round"/>
<line x1="749.2" y1="520.2" x2="755.1" y2="521.0" stroke="#c30000" stroke-width="4.8" stroke-linecap="round"/>
<line x1="755.1" y1="521.0" x2="761.0" y2="521.9" stroke="#c30000" stroke-width="4.8" stroke-linecap="round"/>
<line x1="761.0" y1="521.9" x2="766.9" y2="522.8" stroke="#c30000" stroke-width="4.8" stroke-linecap="round"/>
<line x1="766.9" y1="522.8" x2="772.7" y2="523.6" stroke="#c30000" stroke-width="4.8" stroke-linecap="round"/>
<line x1="772.7" y1="523.6" x2="778.6" y2="524.5" stroke="#c30000" stroke-width="4.8" stroke-linecap="round"/>
<line x1="778.6" y1="524.5" x2="784.5" y2="525.4" stroke="#c30000" stroke-width="4.8" stroke-linecap="round"/>
<line x1="784.5" y1="525.4" x2="790.4" y2="526.2" stroke="#c30000" stroke-width="4.8" stroke-linecap="round"/>
<line x1="790.4" y1="526.2" x2="796.3" y2="527.1" stroke="#c30000" stroke-width="4.8" stroke-linecap="round"/>
<line x1="796.3" y1="527.1" x2="802.2" y2="528.0" stroke="#c30000" stroke-width="4.8" stroke-linecap="round"/>
<line x1="802.2" y1="528.0" x2="808.1" y2="528.8" stroke="#c30000" stroke-width="4.8" stroke-linecap="round"/>
<line x1="808.1" y1="528.8" x2="814.0" y2="529.7" stroke="#c30000" stroke-width="4.8" stroke-linecap="round"/>
<line x1="814.0" y1="529.7" x2="819.8" y2="530.4" stroke="#c60000" stroke-width="4.8" stroke-linecap="round"/>
<line x1="819.8" y1="530.4" x2="825.7" y2="531.2" stroke="#cc0000" stroke-width="4.8" stroke-linecap="round"/>
<line x1="825.7" y1="531.2" x2="831.6" y2="531.9" stroke="#d30000" stroke-width="4.8" stroke-linecap="round"/>
<line x1="831.6" y1="531.9" x2="837.5" y2="532.6" stroke="#da0000" stroke-width="4.8" stroke-linecap="round"/>
<line x1="837.5" y1="532.6" x2="843.4" y2="533.4" stroke="#e30000" stroke-width="4.8" stroke-linecap="round"/>
<line x1="843.4" y1="533.4" x2="849.3" y2="534.1" stroke="#eb0000" stroke-width="4.8" stroke-linecap="round"/>
<line x1="849.3" y1="534.1" x2="855.2" y2="534.8" stroke="#f00f00" stroke-width="4.8" stroke-linecap="round"/>
<line x1="855.2" y1="534.8" x2="861.1" y2="535.6" stroke="#f22d00" stroke-width="4.8" stroke-linecap="round"/>
<line x1="861.1" y1="535.6" x2="866.9" y2="536.3" stroke="#f44b00" stroke-width="4.8" stroke-linecap="round"/>
<line x1="866.9" y1="536.3" x2="872.8" y2="537.0" stroke="#f66900" stroke-width="4.8" stroke-linecap="round"/>
<line x1="872.8" y1="537.0" x2="878.7" y2="537.7" stroke="#f88a00" stroke-width="4.8" stroke-linecap="round"/>
<line x1="878.7" y1="537.7" x2="884.6" y2="538.2" stroke="#f8a500" stroke-width="4.8" stroke-linecap="round"/>
<line x1="884.6" y1="538.2" x2="890.5" y2="538.7" stroke="#f5b500" stroke-width="4.8" stroke-linecap="round"/>
<line x1="890.5" y1="538.7" x2="896.4" y2="539.3" stroke="#f2c400" stroke-width="4.8" stroke-linecap="round"/>
<line x1="896.4" y1="539.3" x2="902.3" y2="539.8" stroke="#efd400" stroke-width="4.8" stroke-linecap="round"/>
<line x1="654.2" y1="453.5" x2="660.1" y2="454.7" stroke="#efd500" stroke-width="4.8" stroke-linecap="round"/>
<line x1="660.1" y1="454.7" x2="666.0" y2="455.8" stroke="#f1c900" stroke-width="4.8" stroke-linecap="round"/>
<line x1="666.0" y1="455.8" x2="671.9" y2="456.9" stroke="#f4bc00" stroke-width="4.8" stroke-linecap="round"/>
<line x1="671.9" y1="456.9" x2="677.8" y2="458.0" stroke="#f6b000" stroke-width="4.8" stroke-linecap="round"/>
<line x1="677.8" y1="458.0" x2="683.7" y2="459.2" stroke="#f9a300" stroke-width="4.8" stroke-linecap="round"/>
<line x1="683.7" y1="459.2" x2="689.6" y2="460.2" stroke="#f88800" stroke-width="4.8" stroke-linecap="round"/>
<line x1="689.6" y1="460.2" x2="695.4" y2="461.3" stroke="#f66600" stroke-width="4.8" stroke-linecap="round"/>
<line x1="695.4" y1="461.3" x2="701.3" y2="462.3" stroke="#f44300" stroke-width="4.8" stroke-linecap="round"/>
<line x1="701.3" y1="462.3" x2="707.2" y2="463.3" stroke="#f22000" stroke-width="4.8" stroke-linecap="round"/>
<line x1="707.2" y1="463.3" x2="713.1" y2="464.3" stroke="#ef0000" stroke-width="4.8" stroke-linecap="round"/>
<line x1="713.1" y1="464.3" x2="719.0" y2="465.3" stroke="#e50000" stroke-width="4.8" stroke-linecap="round"/>
<line x1="719.0" y1="465.3" x2="724.9" y2="466.4" stroke="#db0000" stroke-width="4.8" stroke-linecap="round"/>
<line x1="724.9" y1="466.4" x2="730.8" y2="467.4" stroke="#d30000" stroke-width="4.8" stroke-linecap="round"/>
<line x1="730.8" y1="467.4" x2="736.7" y2="468.4" stroke="#cc0000" stroke-width="4.8" stroke-linecap="round"/>
<line x1="736.7" y1="468.4" x2="742.5" y2="469.4" stroke="#c60000" stroke-width="4.8" stroke-linecap="round"/>
<line x1="742.5" y1="469.4" x2="748.4" y2="470.3" stroke="#c30000" stroke-width="4.8" stroke-linecap="round"/>
<line x1="748.4" y1="470.3" x2="754.3" y2="471.1" stroke="#c30000" stroke-width="4.8" stroke-linecap="round"/>
<line x1="754.3" y1="471.1" x2="760.2" y2="472.0" stroke="#c30000" stroke-width="4.8" stroke-linecap="round"/>
<line x1="760.2" y1="472.0" x2="766.1" y2="472.9" stroke="#c30000" stroke-width="4.8" stroke-linecap="round"/>
<line x1="766.1" y1="472.9" x2="772.0" y2="473.7" stroke="#c30000" stroke-width="4.8" stroke-linecap="round"/>
<line x1="772.0" y1="473.7" x2="777.9" y2="474.6" stroke="#c30000" stroke-width="4.8" stroke-linecap="round"/>
<line x1="777.9" y1="474.6" x2="783.8" y2="475.5" stroke="#c30000" stroke-width="4.8" stroke-linecap="round"/>
<line x1="783.8" y1="475.5" x2="789.6" y2="476.3" stroke="#c30000" stroke-width="4.8" stroke-linecap="round"/>
<line x1="789.6" y1="476.3" x2="795.5" y2="477.2" stroke="#c30000" stroke-width="4.8" stroke-linecap="round"/>
<line x1="795.5" y1="477.2" x2="801.4" y2="478.1" stroke="#c30000" stroke-width="4.8" stroke-linecap="round"/>
<line x1="801.4" y1="478.1" x2="807.3" y2="478.9" stroke="#c30000" stroke-width="4.8" stroke-linecap="round"/>
<line x1="807.3" y1="478.9" x2="813.2" y2="479.8" stroke="#c30000" stroke-width="4.8" stroke-linecap="round"/>
<line x1="813.2" y1="479.8" x2="819.1" y2="480.7" stroke="#c30000" stroke-width="4.8" stroke-linecap="round"/>
<line x1="819.1" y1="480.7" x2="825.0" y2="481.5" stroke="#c30000" stroke-width="4.8" stroke-linecap="round"/>
<line x1="825.0" y1="481.5" x2="830.9" y2="482.4" stroke="#c30000" stroke-width="4.8" stroke-linecap="round"/>
<line x1="830.9" y1="482.4" x2="836.7" y2="483.3" stroke="#c30000" stroke-width="4.8" stroke-linecap="round"/>
<line x1="836.7" y1="483.3" x2="842.6" y2="484.1" stroke="#c30000" stroke-width="4.8" stroke-linecap="round"/>
<line x1="842.6" y1="484.1" x2="848.5" y2="485.0" stroke="#c30000" stroke-width="4.8" stroke-linecap="round"/>
<line x1="848.5" y1="485.0" x2="854.4" y2="485.7" stroke="#c60000" stroke-width="4.8" stroke-linecap="round"/>
<line x1="854.4" y1="485.7" x2="860.3" y2="486.5" stroke="#cc0000" stroke-width="4.8" stroke-linecap="round"/>
<line x1="860.3" y1="486.5" x2="866.2" y2="487.2" stroke="#d30000" stroke-width="4.8" stroke-linecap="round"/>
<line x1="866.2" y1="487.2" x2="872.1" y2="487.9" stroke="#da0000" stroke-width="4.8" stroke-linecap="round"/>
<line x1="872.1" y1="487.9" x2="878.0" y2="488.7" stroke="#e30000" stroke-width="4.8" stroke-linecap="round"/>
<line x1="878.0" y1="488.7" x2="883.8" y2="489.4" stroke="#eb0000" stroke-width="4.8" stroke-linecap="round"/>
<line x1="883.8" y1="489.4" x2="889.7" y2="490.1" stroke="#f00f00" stroke-width="4.8" stroke-linecap="round"/>
<line x1="889.7" y1="490.1" x2="895.6" y2="490.9" stroke="#f22d00" stroke-width="4.8" stroke-linecap="round"/>
<line x1="895.6" y1="490.9" x2="901.5" y2="491.6" stroke="#f44b00" stroke-width="4.8" stroke-linecap="round"/>
<line x1="901.5" y1="491.6" x2="907.4" y2="492.3" stroke="#f66900" stroke-width="4.8" stroke-linecap="round"/>
<line x1="907.4" y1="492.3" x2="913.3" y2="493.0" stroke="#f88a00" stroke-width="4.8" stroke-linecap="round"/>
<line x1="913.3" y1="493.0" x2="919.2" y2="493.5" stroke="#f8a500" stroke-width="4.8" stroke-linecap="round"/>
<line x1="919.2" y1="493.5" x2="925.1" y2="494.0" stroke="#f5b500" stroke-width="4.8" stroke-linecap="round"/>
<line x1="925.1" y1="494.0" x2="930.9" y2="494.6" stroke="#f2c400" stroke-width="4.8" stroke-linecap="round"/>
<line x1="930.9" y1="494.6" x2="936.8" y2="495.1" stroke="#efd400" stroke-width="4.8" stroke-linecap="round"/>
<line x1="619.7" y1="485.1" x2="903.4" y2="526.9" stroke="#8fa4a7" stroke-width="2.0" />
<line x1="654.2" y1="440.4" x2="938.0" y2="482.2" stroke="#8fa4a7" stroke-width="2.0" />
<polyline points="688.8,395.7 702.9,398.1 717.1,400.4 731.2,402.8 745.3,405.1 759.5,407.4 773.6,409.6 787.7,411.9 801.8,414.1 816.0,416.2 830.1,418.3 844.2,420.4 858.4,422.4 872.5,424.3 886.6,426.3 900.8,428.2 914.9,430.0 929.0,431.9 943.1,433.7 957.3,435.5 971.4,437.3" fill="none" stroke="#0a18c8" stroke-width="5.0" stroke-linejoin="round"/>
<polyline points="585.1,529.8 599.2,532.3 613.4,534.8 627.5,537.2 641.6,539.6 655.8,542.0 669.9,544.4 684.0,546.7 698.1,548.9 712.3,551.1 726.4,553.2 740.5,555.2 754.7,557.2 768.8,559.2 782.9,561.0 797.1,562.8 811.2,564.6 825.3,566.3 839.4,568.0 853.6,569.7 867.7,571.4" fill="none" stroke="#0a10a8" stroke-width="5.2" stroke-linejoin="round"/>
<path d="M596.0713000000001,553.2633 L612.0713000000001,554.2633 L613.0713000000001,562.2633 L615.0713000000001,566.2633 L608.0713000000001,568.2633 L607.0713000000001,574.2633 L601.0713000000001,574.2633 L600.0713000000001,568.2633 L594.0713000000001,567.2633 L595.0713000000001,562.2633 Z" fill="#b3f8b3"/>
<path d="M652.3087,561.5417 L668.3087,562.5417 L669.3087,570.5417 L671.3087,574.5417 L664.3087,576.5417 L663.3087,582.5417 L657.3087,582.5417 L656.3087,576.5417 L650.3087,575.5417 L651.3087,570.5417 Z" fill="#b3f8b3"/>
<path d="M708.5461,569.8201 L724.5461,570.8201 L725.5461,578.8201 L727.5461,582.8201 L720.5461,584.8201 L719.5461,590.8201 L713.5461,590.8201 L712.5461,584.8201 L706.5461,583.8201 L707.5461,578.8201 Z" fill="#b3f8b3"/>
<path d="M764.7835000000001,578.0985 L780.7835000000001,579.0985 L781.7835000000001,587.0985 L783.7835000000001,591.0985 L776.7835000000001,593.0985 L775.7835000000001,599.0985 L769.7835000000001,599.0985 L768.7835000000001,593.0985 L762.7835000000001,592.0985 L763.7835000000001,587.0985 Z" fill="#b3f8b3"/>
<path d="M821.0209000000001,586.3769 L837.0209000000001,587.3769 L838.0209000000001,595.3769 L840.0209000000001,599.3769 L833.0209000000001,601.3769 L832.0209000000001,607.3769 L826.0209000000001,607.3769 L825.0209000000001,601.3769 L819.0209000000001,600.3769 L820.0209000000001,595.3769 Z" fill="#b3f8b3"/>
<circle cx="676.0" cy="370.6" r="2" fill="#f06060"/>
<circle cx="546.3" cy="538.6" r="2" fill="#f06060"/>
<circle cx="1239.3" cy="455.4" r="2" fill="#f06060"/>
<circle cx="1109.5" cy="622.8" r="2" fill="#f06060"/>
<circle cx="1369.6" cy="506.0" r="2" fill="#f06060"/>
<circle cx="806.5" cy="422.8" r="2" fill="#f06060"/>
<circle cx="1109.5" cy="952.2" r="2" fill="#f06060"/>
<circle cx="1369.6" cy="835.3" r="2" fill="#f06060"/>
<circle cx="806.3" cy="751.7" r="2" fill="#f06060"/>
<circle cx="733.7" cy="383.6" r="2" fill="#f06060"/>
<circle cx="604.1" cy="551.3" r="2" fill="#f06060"/>
<circle cx="789.9" cy="391.9" r="2" fill="#f06060"/>
<circle cx="660.3" cy="559.5" r="2" fill="#f06060"/>
<circle cx="846.2" cy="400.2" r="2" fill="#f06060"/>
<circle cx="716.5" cy="567.8" r="2" fill="#f06060"/>
<circle cx="902.4" cy="408.5" r="2" fill="#f06060"/>
<circle cx="772.8" cy="576.1" r="2" fill="#f06060"/>
<circle cx="958.6" cy="416.8" r="2" fill="#f06060"/>
<circle cx="829.0" cy="584.4" r="2" fill="#f06060"/>
<circle cx="619.7" cy="485.1" r="1.6" fill="none" stroke="#f07070" stroke-width="0.9"/>
<circle cx="654.2" cy="440.4" r="1.6" fill="none" stroke="#f07070" stroke-width="0.9"/>
<circle cx="903.4" cy="526.9" r="1.6" fill="none" stroke="#f07070" stroke-width="0.9"/>
<circle cx="938.0" cy="482.2" r="1.6" fill="none" stroke="#f07070" stroke-width="0.9"/>
<circle cx="688.8" cy="395.7" r="1.6" fill="none" stroke="#f07070" stroke-width="0.9"/>
<circle cx="971.4" cy="437.3" r="1.6" fill="none" stroke="#f07070" stroke-width="0.9"/>
<circle cx="585.1" cy="529.8" r="1.6" fill="none" stroke="#f07070" stroke-width="0.9"/>
<circle cx="867.7" cy="571.4" r="1.6" fill="none" stroke="#f07070" stroke-width="0.9"/>
<circle cx="651.6" cy="489.8" r="1.6" fill="none" stroke="#f07070" stroke-width="0.9"/>
<circle cx="686.2" cy="445.1" r="1.6" fill="none" stroke="#f07070" stroke-width="0.9"/>
<circle cx="707.8" cy="498.1" r="1.6" fill="none" stroke="#f07070" stroke-width="0.9"/>
<circle cx="742.4" cy="453.4" r="1.6" fill="none" stroke="#f07070" stroke-width="0.9"/>
<circle cx="764.1" cy="506.4" r="1.6" fill="none" stroke="#f07070" stroke-width="0.9"/>
<circle cx="798.6" cy="461.7" r="1.6" fill="none" stroke="#f07070" stroke-width="0.9"/>
<circle cx="820.3" cy="514.6" r="1.6" fill="none" stroke="#f07070" stroke-width="0.9"/>
<circle cx="854.9" cy="469.9" r="1.6" fill="none" stroke="#f07070" stroke-width="0.9"/>
<circle cx="876.6" cy="522.9" r="1.6" fill="none" stroke="#f07070" stroke-width="0.9"/>
<circle cx="911.1" cy="478.2" r="1.6" fill="none" stroke="#f07070" stroke-width="0.9"/>
<polygon points="1227.5,215.1 1315.4,227.2 1315.4,326.1 1227.5,312.8" fill="#e2e2e2"/>
<polygon points="1315.4,227.2 1366.3,205.1 1366.3,303.2 1315.4,326.1" fill="#dadada"/>
<polygon points="1227.5,215.1 1279.2,191.5 1366.3,205.1 1315.4,227.2" fill="#cfcfcf"/>
<line x1="1249.5" y1="218.1" x2="1249.5" y2="316.1" stroke="#1e1e1e" stroke-width="2.2" stroke-linecap="round"/>
<line x1="1227.5" y1="239.5" x2="1315.4" y2="251.9" stroke="#1e1e1e" stroke-width="2.2" stroke-linecap="round"/>
<line x1="1328.1" y1="221.7" x2="1328.1" y2="320.4" stroke="#1e1e1e" stroke-width="2.2" stroke-linecap="round"/>
<line x1="1315.4" y1="251.9" x2="1366.3" y2="229.6" stroke="#1e1e1e" stroke-width="2.2" stroke-linecap="round"/>
<line x1="1240.4" y1="209.2" x2="1328.1" y2="221.7" stroke="#1e1e1e" stroke-width="2.2" stroke-linecap="round"/>
<line x1="1249.5" y1="218.1" x2="1301.0" y2="194.9" stroke="#1e1e1e" stroke-width="2.2" stroke-linecap="round"/>
<line x1="1293.4" y1="224.2" x2="1293.4" y2="322.8" stroke="#1e1e1e" stroke-width="2.2" stroke-linecap="round"/>
<line x1="1227.5" y1="288.4" x2="1315.4" y2="301.4" stroke="#1e1e1e" stroke-width="2.2" stroke-linecap="round"/>
<line x1="1353.6" y1="210.6" x2="1353.6" y2="308.9" stroke="#1e1e1e" stroke-width="2.2" stroke-linecap="round"/>
<line x1="1315.4" y1="301.4" x2="1366.3" y2="278.7" stroke="#1e1e1e" stroke-width="2.2" stroke-linecap="round"/>
<line x1="1266.3" y1="197.4" x2="1353.6" y2="210.6" stroke="#1e1e1e" stroke-width="2.2" stroke-linecap="round"/>
<line x1="1293.4" y1="224.2" x2="1344.5" y2="201.7" stroke="#1e1e1e" stroke-width="2.2" stroke-linecap="round"/>
<line x1="1227.5" y1="215.1" x2="1315.4" y2="227.2" stroke="#333" stroke-width="1.6" stroke-linecap="round"/>
<line x1="1315.4" y1="227.2" x2="1366.3" y2="205.1" stroke="#333" stroke-width="1.6" stroke-linecap="round"/>
<line x1="1366.3" y1="205.1" x2="1279.2" y2="191.5" stroke="#333" stroke-width="1.6" stroke-linecap="round"/>
<line x1="1279.2" y1="191.5" x2="1227.5" y2="215.1" stroke="#333" stroke-width="1.6" stroke-linecap="round"/>
<line x1="1227.5" y1="215.1" x2="1227.5" y2="312.8" stroke="#333" stroke-width="1.6" stroke-linecap="round"/>
<line x1="1227.5" y1="312.8" x2="1315.4" y2="326.1" stroke="#333" stroke-width="1.6" stroke-linecap="round"/>
<line x1="1315.4" y1="326.1" x2="1366.3" y2="303.2" stroke="#333" stroke-width="1.6" stroke-linecap="round"/>
<line x1="1366.3" y1="303.2" x2="1366.3" y2="205.1" stroke="#333" stroke-width="1.6" stroke-linecap="round"/>
<line x1="1315.4" y1="227.2" x2="1315.4" y2="326.1" stroke="#333" stroke-width="1.6" stroke-linecap="round"/>
<text x="1262.5" y="281" font-family="Liberation Sans" font-weight="bold" font-size="18" fill="#70e870" stroke="#70e870" stroke-width="0.6" transform="translate(1262.5,281) scale(0.9,1.0) translate(-1262.5,-281)">-Y</text>
<text x="1334" y="276" font-family="Liberation Sans" font-weight="bold" font-size="17" fill="#f08a8a" transform="translate(1334,276) skewY(-22) scale(0.7,1.1) translate(-1334,-276)">-X</text>
<text x="1284" y="216" font-family="Liberation Sans" font-weight="bold" font-size="13" fill="#9aa2d8" opacity="0.75" transform="translate(1284,216) skewX(-45) scale(1.6,0.55) translate(-1284,-216)">-Z</text>
<line x1="546.4" y1="868" x2="572" y2="872.5" stroke="#e01010" stroke-width="2.4"/><polygon points="578,873.5 569,869 570,877" fill="#e01010"/>
<line x1="546.4" y1="868" x2="534" y2="875" stroke="#10c010" stroke-width="2.4"/><polygon points="530,877 537,871 538,878" fill="#10c010"/>
<line x1="546.4" y1="868" x2="546.4" y2="898" stroke="#1010d0" stroke-width="2.4"/><polygon points="542.4,896 550.4,896 546.4,905" fill="#1010d0"/>
<circle cx="546.4" cy="868" r="3.2" fill="#f0e000"/>
<line x1="552" y1="933" x2="580" y2="937.5" stroke="#e01010" stroke-width="2.4"/><polygon points="586,938.5 577,934 578,942" fill="#e01010"/>
<line x1="552" y1="933" x2="539" y2="940" stroke="#10c010" stroke-width="2.4"/><polygon points="535,942 542,936 543,943" fill="#10c010"/>
<line x1="552" y1="933" x2="552" y2="963" stroke="#1010d0" stroke-width="2.4"/><polygon points="548,961 556,961 552,970" fill="#1010d0"/>
<circle cx="552" cy="933" r="3.2" fill="#f0e000"/>
<defs><clipPath id="avc"><circle cx="1345.6" cy="976.3" r="37.4"/></clipPath><radialGradient id="skin" cx="0.5" cy="0.4" r="0.65"><stop offset="0" stop-color="#f0cdb5"/><stop offset="1" stop-color="#d4a080"/></radialGradient><radialGradient id="hair" cx="0.5" cy="0.55" r="0.6"><stop offset="0" stop-color="#6a5038"/><stop offset="0.55" stop-color="#957f62"/><stop offset="1" stop-color="#b3a183"/></radialGradient></defs>
<circle cx="1345.6" cy="976.3" r="37.4" fill="#e4e5f0"/>
<g clip-path="url(#avc)">
<path d="M1316,1016 L1322,1005 Q1334,998 1345,1000 Q1358,998 1370,1004 L1376,1016 Z" fill="#3f78c8"/>
<path d="M1335,990 L1334,1014 L1356,1014 L1355,990 Z" fill="#dcae90"/>
<path d="M1319,990 Q1313,984 1316,976 Q1312,970 1317,964 Q1319,952 1333,948 Q1349,943 1363,950 Q1376,958 1376,972 Q1379,982 1370,990 Q1362,995 1357,988 L1334,988 Q1328,995 1319,990 Z" fill="url(#hair)"/>
<ellipse cx="1346" cy="976" rx="14.5" ry="20" fill="url(#skin)"/>
<path d="M1331,968 Q1333,953 1346,955 Q1358,954 1361,968 Q1362,958 1356,952 Q1346,946 1336,951 Q1329,958 1331,968 Z" fill="#8a7458"/>
<rect x="1331.8" y="971.5" width="12.3" height="9.8" rx="3" fill="none" stroke="#34508f" stroke-width="2"/><rect x="1347.5" y="971.5" width="12.3" height="9.8" rx="3" fill="none" stroke="#34508f" stroke-width="2"/><line x1="1344" y1="973" x2="1347.5" y2="973" stroke="#3a5aa0" stroke-width="1.5"/>
<path d="M1320,975 Q1324,968 1322,960 M1372,972 Q1368,964 1370,956 M1326,985 Q1330,978 1327,970 M1366,986 Q1362,978 1366,970 M1340,949 Q1348,946 1356,950" fill="none" stroke="#c8b898" stroke-width="1.6" opacity="0.8"/>
<circle cx="1338" cy="976.5" r="1.3" fill="#4a3a30"/><circle cx="1353.5" cy="976.5" r="1.3" fill="#4a3a30"/>
<path d="M1340.5,989 Q1345.6,991.5 1351,989" fill="none" stroke="#b07068" stroke-width="1.8"/>
</g>
 </svg>
 <!-- status -->
 <div class="a" style="left:0;top:1023px;width:1400px;height:27px;background:#e9e9f3"></div>
<svg width="1400" height="1050" viewBox="0 0 1400 1050"><rect x="12.5" y="19.5" width="24.8" height="14" fill="#fffdf5"/><rect x="13" y="20.2" width="23.8" height="7.5" fill="#16237a"/><rect x="13" y="29.8" width="23.8" height="3.1" fill="#16237a"/>
<path d="M13.8,27.5 L20.8,21.5 M21.5,21.5 L34,27 M22,22.5 L28,27.5" stroke="#d8dcf0" stroke-width="0.8" fill="none"/><rect x="20.2" y="20.2" width="1.3" height="12.7" fill="#d8dcf0"/>
<rect x="24.4" y="10.9" width="11.4" height="11" fill="#fff" stroke="#f2c530" stroke-width="1.9"/><path d="M26.5,16.5 Q30,12.5 34,16.5 L31.5,19 Q30,17.5 28.5,18 Z" fill="#3a70c0" stroke="#333" stroke-width="0.5"/>
<text x="15.5" y="18.6" font-family="Liberation Sans" font-weight="bold" font-size="9.5" fill="#f0c020" stroke="#3a3020" stroke-width="0.5">6</text>
<line x1="1216" y1="22.5" x2="1231" y2="22.5" stroke="#111" stroke-width="1.2"/>
<rect x="1284.5" y="14.5" width="15" height="15" rx="1.5" fill="none" stroke="#111" stroke-width="1.3"/>
<path d="M1356,15 L1371,30 M1371,15 L1356,30" stroke="#111" stroke-width="1.4"/>
<rect x="2" y="50.1" width="23.9" height="17.6" fill="#26337e"/><rect x="2" y="60.7" width="23.9" height="2.4" fill="#fff"/><rect x="8" y="51" width="1.9" height="16" rx="0.8" fill="#fff"/>
<path d="M2,57.5 L7.5,52.5 M10.5,52.5 L25.5,59 M11,53.5 L18.5,60.5" stroke="#e8e8f4" stroke-width="0.8" stroke-dasharray="1.2,0.6"/>
<path d="M504,56 L508,59.5 L504,63 M509,56 L513,59.5 L509,63" fill="none" stroke="#222" stroke-width="1.4"/>
<polygon points="521.5,54 521.5,66 529,60" fill="#888"/>
<path d="M886,54 H895 M886,60 H895 M886,66 H907" stroke="#8f8f8f" stroke-width="2"/><circle cx="901.6" cy="55.2" r="4.2" fill="none" stroke="#8f8f8f" stroke-width="2.1"/><line x1="904.8" y1="58.6" x2="908.5" y2="62.3" stroke="#8f8f8f" stroke-width="2.2"/>
<rect x="1323" y="62" width="12" height="3" fill="#333"/>
<rect x="1352.5" y="57.5" width="8" height="7" fill="#f7f7f7" stroke="#333" stroke-width="2"/><path d="M1355.5,57 V54 H1364 V61.5 H1361" fill="none" stroke="#333" stroke-width="2"/>
<path d="M1379,54.5 L1389,64.5 M1389,54.5 L1379,64.5" stroke="#333" stroke-width="2.4"/>
<rect x="6.0" y="78.0" width="1.6" height="1.6" fill="#8a8a8a"/><rect x="6.0" y="81.6" width="1.6" height="1.6" fill="#8a8a8a"/><rect x="6.0" y="85.2" width="1.6" height="1.6" fill="#8a8a8a"/><rect x="6.0" y="88.8" width="1.6" height="1.6" fill="#8a8a8a"/><rect x="6.0" y="92.4" width="1.6" height="1.6" fill="#8a8a8a"/><rect x="6.0" y="96.0" width="1.6" height="1.6" fill="#8a8a8a"/><rect x="6.0" y="99.6" width="1.6" height="1.6" fill="#8a8a8a"/><rect x="6.0" y="103.2" width="1.6" height="1.6" fill="#8a8a8a"/><rect x="6.0" y="106.8" width="1.6" height="1.6" fill="#8a8a8a"/><rect x="6.0" y="110.4" width="1.6" height="1.6" fill="#8a8a8a"/>
<rect x="6.0" y="120.0" width="1.6" height="1.6" fill="#8a8a8a"/><rect x="6.0" y="123.6" width="1.6" height="1.6" fill="#8a8a8a"/><rect x="6.0" y="127.2" width="1.6" height="1.6" fill="#8a8a8a"/><rect x="6.0" y="130.8" width="1.6" height="1.6" fill="#8a8a8a"/><rect x="6.0" y="134.4" width="1.6" height="1.6" fill="#8a8a8a"/><rect x="6.0" y="138.0" width="1.6" height="1.6" fill="#8a8a8a"/><rect x="6.0" y="141.6" width="1.6" height="1.6" fill="#8a8a8a"/><rect x="6.0" y="145.2" width="1.6" height="1.6" fill="#8a8a8a"/><rect x="6.0" y="148.8" width="1.6" height="1.6" fill="#8a8a8a"/><rect x="6.0" y="152.4" width="1.6" height="1.6" fill="#8a8a8a"/>
<path d="M29.6,84.7 H39.6 L43.6,88.7 V104.4 H29.6 Z" fill="#fff" stroke="#5a5a5a" stroke-width="2"/><path d="M39.6,84.7 V88.7 H43.6" fill="none" stroke="#5a5a5a" stroke-width="1.2"/>
<path d="M23,94 Q30,88 40,92 L38,101 Q31,97 26,100 Z" fill="#3f72c8" stroke="#23458a" stroke-width="0.8"/><path d="M25,96 L38,96 M29,91 L27,99 M34,90 L32,99" stroke="#a8c8f0" stroke-width="0.7"/>
<polygon points="25.0,81.5 26.5,85.5 30.6,84.8 27.9,88.0 30.6,91.2 26.5,90.5 25.0,94.5 23.5,90.5 19.4,91.2 22.1,88.0 19.4,84.8 23.5,85.5" fill="#f5f000" stroke="#8a8a50" stroke-width="0.6"/>
<path d="M58,92 H67 L69,90 H80 V106 H58 Z" fill="#f5e9a8" stroke="#b7a043" stroke-width="1.2"/><path d="M57,96 H82 L80,107 H59 Z" fill="#f7ecb0" stroke="#b7a043" stroke-width="1.2"/>
<polygon points="78,82 84,89 80.5,89 80.5,95 75.5,95 75.5,89 72,89" fill="#15963a"/>
<path d="M95.4,83 H104 A10,11.5 0 0 1 104,106 H95.4 Z" fill="#1ab0dd"/><path d="M108,90 A5,5.5 0 1 0 108,99" fill="none" stroke="#fff" stroke-width="3"/>
<path d="M128,81 H136 A12,12 0 0 1 146,86 L140,104 H128 Z" fill="#1ab0dd"/><circle cx="136" cy="93" r="4" fill="#fff"/>
<polygon points="145.2,86.4 155.2,92.0 155.2,103.2 145.2,108.8 135.2,103.2 135.2,92.0" fill="#5ac6e8" stroke="#fff" stroke-width="1"/>
<polygon points="145.2,86.4 155.2,92.0 145.2,97.6 135.2,92.0" fill="#8ad8f2" stroke="#fff" stroke-width="1"/>
<path d="M145.2,97.6 V108.8 M140.2,89.2 L150.2,94.8 M150.2,89.2 L140.2,94.8 M135.2,97.6 L145.2,103.2 L155.2,97.6 M140.2,94.8 L140.2,106.0 M150.2,94.8 L150.2,106.0" stroke="#fff" stroke-width="1" fill="none"/>
<rect x="164.5" y="90.5" width="26" height="17" fill="#fff" stroke="#666" stroke-width="1.5"/><rect x="165" y="91" width="25" height="3" fill="#3a4fd0"/>
<path d="M168,98 H170 M173,98 H187 M168,101.5 H170 M173,101.5 H187 M168,105 H170 M173,105 H187" stroke="#555" stroke-width="1.3"/>
<path d="M165,88 Q172,83 180,84 L188,82 L191,88 L182,95 Q176,97 175,93 L166,90 Z" fill="#e8c9a8" stroke="#8a6a50" stroke-width="0.8"/><path d="M186,80 L192,82 L192,90 L187,90 Z" fill="#4a78c8"/>
<path d="M200,81 H224 L227,84 V108 H205 L200,103 Z" fill="#666"/><rect x="204" y="83" width="19" height="10" rx="1" fill="#fff"/><path d="M206,85.5 H221 M206,88.5 H221" stroke="#777" stroke-width="1.3"/><rect x="207" y="99" width="16" height="9" fill="#fff"/><rect x="210" y="100" width="3" height="8" fill="#666"/>
<rect x="241" y="81" width="17" height="6" fill="#666"/><path d="M236,97 Q236,89 242,89 H257 Q263,89 263,97 V104 H236 Z" fill="#666"/><rect x="241" y="98" width="17" height="10" fill="#fff" stroke="#666" stroke-width="1.5"/><path d="M244,101.5 H255 M244,105 H255" stroke="#666" stroke-width="1.2"/><rect x="258" y="93" width="3" height="1.5" fill="#fff"/>
<polygon points="269.6,90.7 279.6,90.7 274.6,96.7" fill="#111"/>
<path d="M296.0,82.0 H310.0 L314.0,86.0 V107.0 H296.0 Z" fill="#fff" stroke="#5a5a5a" stroke-width="2"/><path d="M310.0,82.0 V86.0 H314.0" fill="none" stroke="#5a5a5a" stroke-width="1.2"/><line x1="299.0" y1="89.6" x2="311.0" y2="89.6" stroke="#555" stroke-width="1.6"/><line x1="299.0" y1="93.7" x2="311.0" y2="93.7" stroke="#555" stroke-width="1.6"/><line x1="299.0" y1="97.7" x2="311.0" y2="97.7" stroke="#555" stroke-width="1.6"/><line x1="299.0" y1="101.8" x2="311.0" y2="101.8" stroke="#555" stroke-width="1.6"/>
<polygon points="298.0,81.0 299.7,85.6 304.5,84.8 301.4,88.5 304.5,92.2 299.7,91.4 298.0,96.0 296.3,91.4 291.5,92.2 294.6,88.5 291.5,84.8 296.3,85.6" fill="#f5f000" stroke="#8a8a50" stroke-width="0.6"/>
<path d="M332.1,82.0 H347.9 L351.9,86.0 V107.0 H332.1 Z" fill="#fff" stroke="#5a5a5a" stroke-width="2"/><path d="M347.9,82.0 V86.0 H351.9" fill="none" stroke="#5a5a5a" stroke-width="1.2"/><line x1="335.1" y1="89.6" x2="348.9" y2="89.6" stroke="#555" stroke-width="1.6"/><line x1="335.1" y1="93.7" x2="348.9" y2="93.7" stroke="#555" stroke-width="1.6"/><line x1="335.1" y1="97.7" x2="348.9" y2="97.7" stroke="#555" stroke-width="1.6"/><line x1="335.1" y1="101.8" x2="348.9" y2="101.8" stroke="#555" stroke-width="1.6"/>
<line x1="362.6" y1="79.0" x2="362.6" y2="111.0" stroke="#6a6a6a" stroke-width="1.1"/>
<path d="M378,98 Q386,86 397,97" fill="none" stroke="#9a9a9a" stroke-width="3"/><polygon points="374.5,89.5 383,99.5 374.5,99.5" fill="#9a9a9a"/>
<polygon points="406.5,91.0 416.5,91.0 411.5,97.0" fill="#606068"/>
<path d="M429,97 Q440,86 448,98" fill="none" stroke="#9a9a9a" stroke-width="3"/><polygon points="452.3,89.5 452.3,99.5 444,99.5" fill="#9a9a9a"/>
<polygon points="460.0,91.0 470.0,91.0 465.0,97.0" fill="#606068"/>
<line x1="481.4" y1="79.0" x2="481.4" y2="111.0" stroke="#6a6a6a" stroke-width="1.1"/>
<rect x="488.5" y="78.5" width="33" height="31" rx="3" fill="#cde5f8" stroke="#9fcdf2" stroke-width="1"/>
<rect x="498.5" y="82.5" width="16" height="25.5" fill="#fff" stroke="#5e5e5e" stroke-width="1.6"/><rect x="499.5" y="83.5" width="14" height="3.5" fill="#3a4fd0"/><path d="M501,89.5 H512 M502,93 H512 M502,96.5 H512 M502,100 H512 M502,103.5 H512" stroke="#333" stroke-width="1.2"/>
<rect x="528.5" y="81.5" width="26" height="26" fill="#bbb" stroke="#5e5e5e" stroke-width="1.8"/><rect x="530" y="83" width="23" height="3.5" fill="#3a4fd0"/>
<rect x="530.5" y="88.5" width="3.4" height="2.2" fill="#f4f4f4"/>
<rect x="530.5" y="91.7" width="3.4" height="2.2" fill="#f4f4f4"/>
<rect x="530.5" y="94.9" width="3.4" height="2.2" fill="#f4f4f4"/>
<rect x="530.5" y="98.1" width="3.4" height="2.2" fill="#f4f4f4"/>
<rect x="530.5" y="101.3" width="3.4" height="2.2" fill="#f4f4f4"/>
<rect x="530.5" y="104.5" width="3.4" height="2.2" fill="#f4f4f4"/>
<rect x="535.1" y="88.5" width="3.4" height="2.2" fill="#f4f4f4"/>
<rect x="535.1" y="91.7" width="3.4" height="2.2" fill="#f4f4f4"/>
<rect x="535.1" y="94.9" width="3.4" height="2.2" fill="#f4f4f4"/>
<rect x="535.1" y="98.1" width="3.4" height="2.2" fill="#f4f4f4"/>
<rect x="535.1" y="101.3" width="3.4" height="2.2" fill="#f4f4f4"/>
<rect x="535.1" y="104.5" width="3.4" height="2.2" fill="#f4f4f4"/>
<rect x="539.7" y="88.5" width="3.4" height="2.2" fill="#f4f4f4"/>
<rect x="539.7" y="91.7" width="3.4" height="2.2" fill="#f4f4f4"/>
<rect x="539.7" y="94.9" width="3.4" height="2.2" fill="#f4f4f4"/>
<rect x="539.7" y="98.1" width="3.4" height="2.2" fill="#f4f4f4"/>
<rect x="539.7" y="101.3" width="3.4" height="2.2" fill="#f4f4f4"/>
<rect x="539.7" y="104.5" width="3.4" height="2.2" fill="#f4f4f4"/>
<rect x="544.3" y="88.5" width="3.4" height="2.2" fill="#f4f4f4"/>
<rect x="544.3" y="91.7" width="3.4" height="2.2" fill="#f4f4f4"/>
<rect x="544.3" y="94.9" width="3.4" height="2.2" fill="#f4f4f4"/>
<rect x="544.3" y="98.1" width="3.4" height="2.2" fill="#f4f4f4"/>
<rect x="544.3" y="101.3" width="3.4" height="2.2" fill="#f4f4f4"/>
<rect x="544.3" y="104.5" width="3.4" height="2.2" fill="#f4f4f4"/>
<rect x="548.9" y="88.5" width="3.4" height="2.2" fill="#f4f4f4"/>
<rect x="548.9" y="91.7" width="3.4" height="2.2" fill="#f4f4f4"/>
<rect x="548.9" y="94.9" width="3.4" height="2.2" fill="#f4f4f4"/>
<rect x="548.9" y="98.1" width="3.4" height="2.2" fill="#f4f4f4"/>
<rect x="548.9" y="101.3" width="3.4" height="2.2" fill="#f4f4f4"/>
<rect x="548.9" y="104.5" width="3.4" height="2.2" fill="#f4f4f4"/>
<path d="M566.5,108 V84 M563,102 H589" stroke="#444" stroke-width="1.6"/><polygon points="566.5,81 563.5,86 569.5,86" fill="#444"/><polygon points="590,102 585,99 585,105" fill="#444"/><path d="M567,107 L575,96 L580,102 L589,83" fill="none" stroke="#4a9ae8" stroke-width="1"/>
<rect x="605" y="81.5" width="17" height="26" fill="#eee" stroke="#5e5e5e" stroke-width="1.8"/><rect x="606" y="82.5" width="15" height="3" fill="#3a4fd0"/>
<rect x="607" y="88.0" width="6" height="2.2" fill="#d42020"/><rect x="614" y="88.0" width="6" height="1.4" fill="#444"/>
<rect x="607" y="91.4" width="6" height="2.2" fill="#f0a000"/><rect x="614" y="91.4" width="6" height="1.4" fill="#444"/>
<rect x="607" y="94.8" width="6" height="2.2" fill="#20d020"/><rect x="614" y="94.8" width="6" height="1.4" fill="#444"/>
<rect x="607" y="98.2" width="6" height="2.2" fill="#1aa0f0"/><rect x="614" y="98.2" width="6" height="1.4" fill="#444"/>
<rect x="607" y="101.6" width="6" height="2.2" fill="#1020a8"/><rect x="614" y="101.6" width="6" height="1.4" fill="#444"/>
<rect x="636.5" y="81.5" width="26.5" height="26.5" fill="#e8e8e8" stroke="#5e5e5e" stroke-width="1.8"/><rect x="637.5" y="82.5" width="24.5" height="3" fill="#3a4fd0"/>
<path d="M640,88 L647,91.5 L640,95 M647,88 L654,91.5 L647,95" fill="none" stroke="#222" stroke-width="2.2"/><rect x="654.5" y="97" width="5.5" height="2.2" fill="#222"/>
<rect x="677" y="81.5" width="16.5" height="14" fill="#fff" stroke="#5e5e5e" stroke-width="1.6"/><rect x="678" y="82.5" width="14.5" height="2.6" fill="#3a4fd0"/><rect x="672.5" y="95.5" width="26" height="13" rx="3" fill="#c8c8c8"/>
<text x="673.5" y="107" font-family="Liberation Sans" font-weight="bold" font-size="14" fill="#333" stroke="#333" stroke-width="0.7" letter-spacing="-0.6" transform="translate(673.5,107) scale(0.92,1) translate(-673.5,-107)">&gt;SC</text>
<polygon points="709,105 716,99 735,99 728,105" fill="#ccc" stroke="#222" stroke-width="1.3"/><polygon points="709,100 716,94 735,94 728,100" fill="#ccc" stroke="#222" stroke-width="1.3"/><polygon points="709,95 716,89 735,89 728,95" fill="#ccc" stroke="#222" stroke-width="1.3"/>
<rect x="719.8" y="81.8" width="14.5" height="9.5" fill="#ececec" stroke="#707070" stroke-width="1.5"/><rect x="720.5" y="82.5" width="13.0" height="3" fill="#3a4fd0"/><rect x="721.0" y="83.0" width="2.5" height="2" fill="#ddd"/>
<rect x="749" y="81.5" width="17" height="26" fill="#eee" stroke="#5e5e5e" stroke-width="1.8"/><rect x="750" y="82.5" width="15" height="3" fill="#3a4fd0"/><path d="M751,88.5 H764 M751,98.5 H764" stroke="#3a60d0" stroke-width="1.2"/><path d="M753,91.5 H763 M753,94.5 H763 M753,101.5 H763 M753,104.5 H763" stroke="#555" stroke-width="1.2"/>
<path d="M784,98 V93 A9.5,10 0 0 1 803,93 V98" fill="none" stroke="#555" stroke-width="1"/><circle cx="793.5" cy="96" r="7" fill="#666"/><polygon points="790,101 797,101 793.5,106" fill="#666"/><rect x="782" y="94" width="3" height="6" rx="1.5" fill="#666"/><rect x="802" y="94" width="3" height="6" rx="1.5" fill="#666"/><path d="M803,100 Q803,106 794,106" fill="none" stroke="#555" stroke-width="0.9"/>
<path d="M789.5,97.5 Q793.5,101.5 797.5,97.5" fill="none" stroke="#ddd" stroke-width="1.2"/><circle cx="791" cy="94" r="0.9" fill="#ddd"/><circle cx="796" cy="94" r="0.9" fill="#ddd"/>
<line x1="811.7" y1="75.0" x2="811.7" y2="116.0" stroke="#dedede" stroke-width="1"/>
<rect x="816.5" y="79.0" width="1.6" height="1.6" fill="#8a8a8a"/><rect x="816.5" y="82.6" width="1.6" height="1.6" fill="#8a8a8a"/><rect x="816.5" y="86.2" width="1.6" height="1.6" fill="#8a8a8a"/><rect x="816.5" y="89.8" width="1.6" height="1.6" fill="#8a8a8a"/><rect x="816.5" y="93.4" width="1.6" height="1.6" fill="#8a8a8a"/><rect x="816.5" y="97.0" width="1.6" height="1.6" fill="#8a8a8a"/><rect x="816.5" y="100.6" width="1.6" height="1.6" fill="#8a8a8a"/><rect x="816.5" y="104.2" width="1.6" height="1.6" fill="#8a8a8a"/><rect x="816.5" y="107.8" width="1.6" height="1.6" fill="#8a8a8a"/><rect x="816.5" y="111.4" width="1.6" height="1.6" fill="#8a8a8a"/>
<rect x="834.8" y="87.0" width="4" height="11.0" fill="#6a9ad0"/><polygon points="831.8,97.0 841.8,97.0 836.8,104.0" fill="#6a9ad0"/>
<rect x="830" y="105" width="27" height="3" fill="#111"/>
<rect x="842.2" y="81.8" width="14.0" height="10.5" fill="#ececec" stroke="#707070" stroke-width="1.5"/><rect x="843.0" y="82.5" width="12.5" height="3" fill="#3a4fd0"/><rect x="843.5" y="83.0" width="2.5" height="2" fill="#ddd"/>
<polygon points="835.0,79.5 836.7,84.1 841.5,83.2 838.4,87.0 841.5,90.8 836.7,89.9 835.0,94.5 833.3,89.9 828.5,90.8 831.6,87.0 828.5,83.2 833.3,84.1" fill="#f5f000" stroke="#8a8a50" stroke-width="0.6"/>
<rect x="867.5" y="87.0" width="4" height="11.0" fill="#6a9ad0"/><polygon points="864.5,97.0 874.5,97.0 869.5,104.0" fill="#6a9ad0"/>
<rect x="866" y="105" width="27" height="3" fill="#111"/>
<rect x="878.2" y="81.8" width="14.0" height="10.5" fill="#ececec" stroke="#707070" stroke-width="1.5"/><rect x="879.0" y="82.5" width="12.5" height="3" fill="#3a4fd0"/><rect x="879.5" y="83.0" width="2.5" height="2" fill="#ddd"/>
<rect x="903.1" y="86" width="16.8" height="16.8" fill="#c8fbfb"/><rect x="924.9" y="86" width="17" height="16.8" fill="#c8fbfb"/><rect x="947.1" y="85.1" width="44.8" height="19.8" fill="#9cbb5a"/>
<line x1="1042.5" y1="84.0" x2="1042.5" y2="105.0" stroke="#fff" stroke-width="1.5"/>
<path d="M1077.0,92.3 L1082.5,97.3 L1088.0,92.3" fill="none" stroke="#555" stroke-width="1.5"/>
<line x1="1094.3" y1="81.0" x2="1094.3" y2="109.0" stroke="#fff" stroke-width="1.5"/>
<line x1="1118.3" y1="81.0" x2="1118.3" y2="109.0" stroke="#fff" stroke-width="1.5"/>
<polygon points="1109,90.6 1109,100.9 1102.9,95.7" fill="#111"/><polygon points="1128,90.6 1128,100.9 1134.3,95.7" fill="#111"/>
<polygon points="1148,86 1163.4,86 1158,95 1158,105 1153,105 1153,95" fill="#6a8ac6"/><rect x="1153" y="95" width="5" height="10" fill="#8ab0e8"/><path d="M1163,83.5 L1172.5,93 M1172.5,83.5 L1163,93" stroke="#f01010" stroke-width="3.2" stroke-linecap="round"/>
<polygon points="1181.0,91.0 1192.0,91.0 1186.5,97.0" fill="#111"/>
<ellipse cx="1220.6" cy="86.8" rx="7.0" ry="4.6" fill="#fff" stroke="#1c1c5a" stroke-width="1.8"/><circle cx="1220.6" cy="86.8" r="2.9" fill="#3a6ad8"/><circle cx="1220.6" cy="86.8" r="1.2" fill="#111"/>
<path d="M1208,91 Q1206,101 1214.5,107" fill="none" stroke="#18a040" stroke-width="2"/><path d="M1212,92 L1215,107" stroke="#111" stroke-width="1.5" stroke-dasharray="2,1.5"/>
<text x="1238.5" y="91" font-family="Liberation Sans" font-weight="bold" font-size="11.5" fill="#666" letter-spacing="0.6">x.xx</text><path d="M1245,92 Q1243,101 1250,107" fill="none" stroke="#999" stroke-width="1.8"/><path d="M1249,92 L1251,107" stroke="#777" stroke-width="1.2" stroke-dasharray="2,1.5"/>
<rect x="1278.5" y="91.0" width="4" height="7.0" fill="#6a9ad0"/><polygon points="1275.5,97.0 1285.5,97.0 1280.5,104.0" fill="#6a9ad0"/>
<rect x="1274" y="105.5" width="26.4" height="2.5" fill="#111"/>
<ellipse cx="1292.7" cy="86.8" rx="7.0" ry="4.6" fill="#fff" stroke="#1c1c5a" stroke-width="1.8"/><circle cx="1292.7" cy="86.8" r="2.9" fill="#3a6ad8"/><circle cx="1292.7" cy="86.8" r="1.2" fill="#111"/>
<text x="1311" y="91" font-family="Liberation Sans" font-weight="bold" font-size="11.5" fill="#666" letter-spacing="0.6">x.xx</text>
<rect x="1316.0" y="92.0" width="4" height="6.0" fill="#aaa"/><polygon points="1313.0,97.0 1323.0,97.0 1318.0,104.0" fill="#aaa"/>
<rect x="1311.5" y="105.5" width="26" height="2.5" fill="#888"/>
<rect x="1346" y="88" width="8" height="18" fill="#e4e4e4" stroke="#ccc" stroke-width="0.8"/><rect x="1352" y="85" width="10" height="20" fill="#d0d0d0" stroke="#bbb" stroke-width="0.8"/><rect x="1360" y="90" width="9" height="15" fill="#aaa"/>
<g opacity="0.5"><ellipse cx="1364.5" cy="86.5" rx="6.6" ry="4.4" fill="#fff" stroke="#1c1c5a" stroke-width="1.7"/><circle cx="1364.5" cy="86.5" r="2.8" fill="#3a6ad8"/><circle cx="1364.5" cy="86.5" r="1.1" fill="#111"/></g>
<path d="M1384,88.6 L1388,92 L1384,95.4 M1389.5,88.6 L1393.5,92 L1389.5,95.4" fill="none" stroke="#222" stroke-width="1.5"/>
<rect x="21.1" y="125.3" width="2.6" height="2.6" fill="#8a8a8a"/><rect x="21.1" y="130.4" width="2.6" height="2.6" fill="#8a8a8a"/><rect x="21.1" y="135.6" width="2.6" height="2.6" fill="#8a8a8a"/><rect x="21.1" y="140.7" width="2.6" height="2.6" fill="#8a8a8a"/><rect x="21.1" y="145.9" width="2.6" height="2.6" fill="#8a8a8a"/><rect x="26.2" y="125.3" width="2.6" height="2.6" fill="#8a8a8a"/><rect x="26.2" y="130.4" width="2.6" height="2.6" fill="#8a8a8a"/><rect x="26.2" y="135.6" width="2.6" height="2.6" fill="#8a8a8a"/><rect x="26.2" y="140.7" width="2.6" height="2.6" fill="#8a8a8a"/><rect x="26.2" y="145.9" width="2.6" height="2.6" fill="#8a8a8a"/><rect x="31.4" y="125.3" width="2.6" height="2.6" fill="#8a8a8a"/><rect x="31.4" y="130.4" width="2.6" height="2.6" fill="#8a8a8a"/><rect x="31.4" y="135.6" width="2.6" height="2.6" fill="#8a8a8a"/><rect x="31.4" y="140.7" width="2.6" height="2.6" fill="#8a8a8a"/><rect x="31.4" y="145.9" width="2.6" height="2.6" fill="#8a8a8a"/><rect x="36.5" y="125.3" width="2.6" height="2.6" fill="#8a8a8a"/><rect x="36.5" y="130.4" width="2.6" height="2.6" fill="#8a8a8a"/><rect x="36.5" y="135.6" width="2.6" height="2.6" fill="#8a8a8a"/><rect x="36.5" y="140.7" width="2.6" height="2.6" fill="#8a8a8a"/><rect x="36.5" y="145.9" width="2.6" height="2.6" fill="#8a8a8a"/><rect x="41.7" y="125.3" width="2.6" height="2.6" fill="#8a8a8a"/><rect x="41.7" y="130.4" width="2.6" height="2.6" fill="#8a8a8a"/><rect x="41.7" y="135.6" width="2.6" height="2.6" fill="#8a8a8a"/><rect x="41.7" y="140.7" width="2.6" height="2.6" fill="#8a8a8a"/><rect x="41.7" y="145.9" width="2.6" height="2.6" fill="#8a8a8a"/>
<rect x="32.8" y="123.8" width="13.5" height="10.5" fill="#ececec" stroke="#707070" stroke-width="1.5"/><rect x="33.5" y="124.5" width="12.0" height="3" fill="#3a4fd0"/><rect x="34.0" y="125.0" width="2.5" height="2" fill="#ddd"/>
<rect x="57.8" y="125.3" width="2.6" height="2.6" fill="#8a8a8a"/><rect x="57.8" y="130.4" width="2.6" height="2.6" fill="#8a8a8a"/><rect x="57.8" y="135.6" width="2.6" height="2.6" fill="#8a8a8a"/><rect x="57.8" y="140.7" width="2.6" height="2.6" fill="#8a8a8a"/><rect x="57.8" y="145.9" width="2.6" height="2.6" fill="#8a8a8a"/><rect x="62.9" y="125.3" width="2.6" height="2.6" fill="#8a8a8a"/><rect x="62.9" y="130.4" width="2.6" height="2.6" fill="#8a8a8a"/><rect x="62.9" y="135.6" width="2.6" height="2.6" fill="#8a8a8a"/><rect x="62.9" y="140.7" width="2.6" height="2.6" fill="#8a8a8a"/><rect x="62.9" y="145.9" width="2.6" height="2.6" fill="#8a8a8a"/><rect x="68.1" y="125.3" width="2.6" height="2.6" fill="#8a8a8a"/><rect x="68.1" y="130.4" width="2.6" height="2.6" fill="#8a8a8a"/><rect x="68.1" y="135.6" width="2.6" height="2.6" fill="#8a8a8a"/><rect x="68.1" y="140.7" width="2.6" height="2.6" fill="#8a8a8a"/><rect x="68.1" y="145.9" width="2.6" height="2.6" fill="#8a8a8a"/><rect x="73.2" y="125.3" width="2.6" height="2.6" fill="#8a8a8a"/><rect x="73.2" y="130.4" width="2.6" height="2.6" fill="#8a8a8a"/><rect x="73.2" y="135.6" width="2.6" height="2.6" fill="#8a8a8a"/><rect x="73.2" y="140.7" width="2.6" height="2.6" fill="#8a8a8a"/><rect x="73.2" y="145.9" width="2.6" height="2.6" fill="#8a8a8a"/><rect x="78.4" y="125.3" width="2.6" height="2.6" fill="#8a8a8a"/><rect x="78.4" y="130.4" width="2.6" height="2.6" fill="#8a8a8a"/><rect x="78.4" y="135.6" width="2.6" height="2.6" fill="#8a8a8a"/><rect x="78.4" y="140.7" width="2.6" height="2.6" fill="#8a8a8a"/><rect x="78.4" y="145.9" width="2.6" height="2.6" fill="#8a8a8a"/>
<path d="M69.1,125.5 V148.6 M57.1,136.6 H80.6" stroke="#101090" stroke-width="2"/><circle cx="69.1" cy="136.6" r="4.6" fill="#f7f7f7" stroke="#101090" stroke-width="2"/>
<rect x="98.0" y="126.5" width="16" height="16" fill="#a8cdea" stroke="#2f5a8a" stroke-width="1.3"/><polygon points="102.0,145.5 102.0,128.5 109.0,122.5 109.0,139.5" fill="#a8cdea" stroke="#2f5a8a" stroke-width="1.3" fill-opacity="0.85"/><polygon points="93.0,137.5 100.0,131.5 118.0,131.5 111.0,137.5" fill="#e84a4a" stroke="#222" stroke-width="1.3" fill-opacity="0.85"/>
<rect x="134.5" y="126.5" width="16" height="16" fill="#a8cdea" stroke="#2f5a8a" stroke-width="1.3"/><polygon points="129.5,137.5 136.5,131.5 154.5,131.5 147.5,137.5" fill="#a8cdea" stroke="#2f5a8a" stroke-width="1.3" fill-opacity="0.85"/><polygon points="138.5,145.5 138.5,128.5 145.5,122.5 145.5,139.5" fill="#e84a4a" stroke="#222" stroke-width="1.3" fill-opacity="0.85"/>
<rect x="160.5" y="120.5" width="33" height="31" rx="3" fill="#cde5f8" stroke="#9fcdf2" stroke-width="1"/>
<rect x="170.0" y="127.0" width="16" height="16" fill="#e84a4a" stroke="#222" stroke-width="1.3"/><polygon points="174.0,146.0 174.0,129.0 181.0,123.0 181.0,140.0" fill="#a8cdea" stroke="#2f5a8a" stroke-width="1.3" fill-opacity="0.85"/><polygon points="165.0,138.0 172.0,132.0 190.0,132.0 183.0,138.0" fill="#a8cdea" stroke="#2f5a8a" stroke-width="1.3" fill-opacity="0.85"/>
<line x1="200.7" y1="121.0" x2="200.7" y2="153.0" stroke="#6a6a6a" stroke-width="1.1"/>
<circle cx="217" cy="127.5" r="3.3" fill="none" stroke="#999" stroke-width="1.5"/><path d="M222,125 L230,133 M230,128.5 V133.5 H225" fill="none" stroke="#999" stroke-width="1.3"/><circle cx="228.5" cy="138.5" r="3.3" fill="none" stroke="#999" stroke-width="1.5"/><circle cx="231" cy="142" r="3.3" fill="none" stroke="#999" stroke-width="1.5"/>
<ellipse cx="259.5" cy="136.5" rx="11.5" ry="6" fill="none" stroke="#999" stroke-width="2.2"/><rect x="258" y="128" width="3" height="18" fill="#f7f7f7"/><path d="M259.5,123 V150" stroke="#999" stroke-width="1" stroke-dasharray="2,1.5"/><polygon points="249,140 256,143 249,145" fill="#999"/>
<path d="M294,124 V149 M297,124 V149" stroke="#999" stroke-width="1" stroke-dasharray="2,1.5"/><polygon points="292.5,125 292.5,147.5 283,147.5" fill="none" stroke="#999" stroke-width="1.5"/><polygon points="298.5,125 298.5,147.5 308,147.5" fill="none" stroke="#999" stroke-width="1.5"/>
<path d="M321.5,125.5 L343.5,147.5 M343.5,125.5 L321.5,147.5" stroke="#111" stroke-width="1.8"/><circle cx="321.5" cy="125.5" r="2.6" fill="#e01010"/><circle cx="343.5" cy="125.5" r="2.6" fill="#e01010"/><circle cx="321.5" cy="147.5" r="2.6" fill="#e01010"/><circle cx="343.5" cy="147.5" r="2.6" fill="#e01010"/><circle cx="332.5" cy="136.5" r="2.5" fill="#b01010"/><circle cx="332.5" cy="136.5" r="4.3" fill="none" stroke="#f02020" stroke-width="0.8" stroke-dasharray="1.5,1"/>
<rect x="356" y="127" width="25.5" height="21" rx="3" fill="#fff" stroke="#666" stroke-width="1.8"/><path d="M358,127 Q361,122 365,127 M364,127 Q368,122 372,127 M371,127 Q375,122 379,127" fill="#fff" stroke="#666" stroke-width="1.4"/><circle cx="368.7" cy="137.5" r="5.5" fill="#666"/><circle cx="368.7" cy="137.5" r="2.2" fill="#fff"/><path d="M359,134 H362 M359,141 H362 M375,134 H379 M375,141 H379 M359,146 H379" stroke="#888" stroke-width="1"/>
<circle cx="368.7" cy="137.5" r="7" fill="none" stroke="#666" stroke-width="1.8" stroke-dasharray="2.2,1.6"/>
<line x1="386.6" y1="117.0" x2="386.6" y2="157.0" stroke="#dedede" stroke-width="1"/>
<rect x="391.5" y="121.0" width="1.6" height="1.6" fill="#8a8a8a"/><rect x="391.5" y="124.6" width="1.6" height="1.6" fill="#8a8a8a"/><rect x="391.5" y="128.2" width="1.6" height="1.6" fill="#8a8a8a"/><rect x="391.5" y="131.8" width="1.6" height="1.6" fill="#8a8a8a"/><rect x="391.5" y="135.4" width="1.6" height="1.6" fill="#8a8a8a"/><rect x="391.5" y="139.0" width="1.6" height="1.6" fill="#8a8a8a"/><rect x="391.5" y="142.6" width="1.6" height="1.6" fill="#8a8a8a"/><rect x="391.5" y="146.2" width="1.6" height="1.6" fill="#8a8a8a"/><rect x="391.5" y="149.8" width="1.6" height="1.6" fill="#8a8a8a"/><rect x="391.5" y="153.4" width="1.6" height="1.6" fill="#8a8a8a"/>
<path d="M412.5,141 V130" stroke="#1030d0" stroke-width="1.6"/><polygon points="409.5,131 415.5,131 412.5,126" fill="#1030d0"/><path d="M412.5,141 L402,148" stroke="#18a040" stroke-width="2.4"/><polygon points="399,150 403,144 406,149" fill="#18a040"/><path d="M412.5,141 L427,143" stroke="#d04010" stroke-width="2.4"/><polygon points="431,143.5 425,140 425,147" fill="#d04010"/><circle cx="412.5" cy="141" r="3" fill="#f0d800"/>
<rect x="416.8" y="123.8" width="14.0" height="10.0" fill="#ececec" stroke="#707070" stroke-width="1.5"/><rect x="417.5" y="124.5" width="12.5" height="3" fill="#3a4fd0"/><rect x="418.0" y="125.0" width="2.5" height="2" fill="#ddd"/>
<rect x="442" y="128" width="17.1" height="16.8" fill="#c8fbfb"/>
<path d="M719.9,134.0 L725.4,139.0 L730.9,134.0" fill="none" stroke="#555" stroke-width="1.5"/>
<line x1="743.5" y1="121.0" x2="743.5" y2="153.0" stroke="#6a6a6a" stroke-width="1.1"/>
<polygon points="756.0,137.0 762.0,131.0 772.0,131.0 766.0,137.0" fill="#a9c2dd" stroke="#222" stroke-width="1"/><rect x="756.0" y="137.0" width="10" height="12" fill="#6d8fb5" stroke="#222" stroke-width="1"/><polygon points="766.0,137.0 772.0,131.0 772.0,143.0 766.0,149.0" fill="#9ab5d5" stroke="#222" stroke-width="1"/>
<rect x="766.8" y="123.8" width="13.5" height="10.5" fill="#ececec" stroke="#707070" stroke-width="1.5"/><rect x="767.5" y="124.5" width="12.0" height="3" fill="#3a4fd0"/><rect x="768.0" y="125.0" width="2.5" height="2" fill="#ddd"/>
<polygon points="759.0,121.5 760.7,126.1 765.5,125.2 762.4,129.0 765.5,132.8 760.7,131.9 759.0,136.5 757.3,131.9 752.5,132.8 755.6,129.0 752.5,125.2 757.3,126.1" fill="#f5f000" stroke="#8a8a50" stroke-width="0.6"/>
<path d="M754,141 V148.5 H759 M781,141 V148.5 H775" fill="none" stroke="#1030a8" stroke-width="1.6"/>
<rect x="798" y="132" width="9" height="16" fill="#6d8fb5" stroke="#222" stroke-width="1"/><polygon points="798,132 802,128 811,128 807,132" fill="#a9c2dd" stroke="#222" stroke-width="1"/><polygon points="807,132 811,128 811,144 807,148" fill="#4a6a90" stroke="#222" stroke-width="1"/><path d="M791.5,135 Q792,127 803,127 Q815,127 816,131" fill="none" stroke="#1030a8" stroke-width="1.7" stroke-dasharray="5,3"/><polygon points="816.5,127 818,132 813,131" fill="#1030a8"/><polygon points="790,135 794,134 791,138" fill="#1030a8"/>
<rect x="827" y="135" width="16" height="9" fill="#6d8fb5" stroke="#222" stroke-width="1"/><polygon points="827,135 831,131 847,131 843,135" fill="#a9c2dd" stroke="#222" stroke-width="1"/><polygon points="843,135 847,131 847,140 843,144" fill="#4a6a90" stroke="#222" stroke-width="1"/><path d="M848.5,124 Q852,137 846,149" fill="none" stroke="#1030a8" stroke-width="1.7" stroke-dasharray="5,3"/><polygon points="848.5,122 846,127 851,127" fill="#1030a8"/><polygon points="842,151 844,146 848,149" fill="#1030a8"/>
<polygon points="871.0,135.0 877.0,129.0 887.0,129.0 881.0,135.0" fill="#a9c2dd" stroke="#222" stroke-width="1"/><rect x="871.0" y="135.0" width="10" height="12" fill="#6d8fb5" stroke="#222" stroke-width="1"/><polygon points="881.0,135.0 887.0,129.0 887.0,141.0 881.0,147.0" fill="#9ab5d5" stroke="#222" stroke-width="1"/>
<path d="M865,133 V127 H870 M865,141 V148.5 H870 M888,141 V148.5 H883" fill="none" stroke="#1030a8" stroke-width="1.8"/>
<rect x="904" y="130" width="6" height="19" fill="#6d8fb5" stroke="#222" stroke-width="1"/><polygon points="910,130 916,124 916,143 910,149" fill="#b5cae0" stroke="#222" stroke-width="1"/>
<rect x="910.8" y="123.8" width="13.5" height="10.5" fill="#ececec" stroke="#707070" stroke-width="1.5"/><rect x="911.5" y="124.5" width="12.0" height="3" fill="#3a4fd0"/><rect x="912.0" y="125.0" width="2.5" height="2" fill="#ddd"/>
<polygon points="902.0,122.5 903.7,127.1 908.5,126.2 905.4,130.0 908.5,133.8 903.7,132.9 902.0,137.5 900.3,132.9 895.5,133.8 898.6,130.0 895.5,126.2 900.3,127.1" fill="#f5f000" stroke="#8a8a50" stroke-width="0.6"/>
<path d="M899,140 V149 H903 M925,141 V148.5 H919" fill="none" stroke="#1030a8" stroke-width="1.6"/>
<line x1="934.7" y1="121.0" x2="934.7" y2="153.0" stroke="#6a6a6a" stroke-width="1.1"/>
<polygon points="946,147 951,143 968,143 963,147" fill="#ccc" stroke="#222" stroke-width="1.2"/><polygon points="946,142 951,138 968,138 963,142" fill="#ccc" stroke="#222" stroke-width="1.2"/><polygon points="946,137 951,133 968,133 963,137" fill="#f0e0a0" stroke="#222" stroke-width="1.2"/><circle cx="952" cy="135" r="1.5" fill="#e01010"/><circle cx="960" cy="135" r="1.5" fill="#e01010"/>
<rect x="957.8" y="123.8" width="13.5" height="8.5" fill="#ececec" stroke="#707070" stroke-width="1.5"/><rect x="958.5" y="124.5" width="12.0" height="3" fill="#3a4fd0"/><rect x="959.0" y="125.0" width="2.5" height="2" fill="#ddd"/>
<polygon points="950.0,121.5 951.7,126.1 956.5,125.2 953.4,129.0 956.5,132.8 951.7,131.9 950.0,136.5 948.3,131.9 943.5,132.8 946.6,129.0 943.5,125.2 948.3,126.1" fill="#f5f000" stroke="#8a8a50" stroke-width="0.6"/>
<polygon points="961,136 961,149 964,146 967,151 969,150 966,145 970,145" fill="#fff" stroke="#333" stroke-width="0.8"/>
<polygon points="982,147 987,143 1004,143 999,147" fill="none" stroke="#555" stroke-width="1" stroke-dasharray="2,1.5"/><polygon points="982,142 987,138 1004,138 999,142" fill="#f0e0a0" stroke="#222" stroke-width="1.2"/><polygon points="982,137 987,133 1004,133 999,137" fill="#f0e0a0" stroke="#222" stroke-width="1.2"/><circle cx="988" cy="140" r="1.5" fill="#e01010"/><circle cx="995" cy="135" r="1.5" fill="#e01010"/>
<rect x="993.8" y="123.8" width="13.5" height="8.5" fill="#ececec" stroke="#707070" stroke-width="1.5"/><rect x="994.5" y="124.5" width="12.0" height="3" fill="#3a4fd0"/><rect x="995.0" y="125.0" width="2.5" height="2" fill="#ddd"/>
<polygon points="986.0,121.5 987.7,126.1 992.5,125.2 989.4,129.0 992.5,132.8 987.7,131.9 986.0,136.5 984.3,131.9 979.5,132.8 982.6,129.0 979.5,125.2 984.3,126.1" fill="#f5f000" stroke="#8a8a50" stroke-width="0.6"/>
<polygon points="997,136 997,149 1000,146 1003,151 1005,150 1002,145 1006,145" fill="#fff" stroke="#333" stroke-width="0.8"/>
<polygon points="1023.0,121.5 1024.7,126.1 1029.5,125.2 1026.4,129.0 1029.5,132.8 1024.7,131.9 1023.0,136.5 1021.3,131.9 1016.5,132.8 1019.6,129.0 1016.5,125.2 1021.3,126.1" fill="#f5f000" stroke="#8a8a50" stroke-width="0.6"/>
<text x="1024" y="142" font-family="Liberation Sans" font-weight="bold" font-size="14" fill="#111">x</text><path d="M1017,143 V150 M1044,143 V150 M1018,147 H1043" stroke="#111" stroke-width="1.6"/><polygon points="1018,147 1022,145 1022,149" fill="#111"/><polygon points="1043,147 1039,145 1039,149" fill="#111"/>
<polygon points="1049.9,132.5 1060.9,132.5 1055.4,138.5" fill="#111"/>
<polygon points="1078.0,120.5 1079.7,125.1 1084.5,124.2 1081.4,128.0 1084.5,131.8 1079.7,130.9 1078.0,135.5 1076.3,130.9 1071.5,131.8 1074.6,128.0 1071.5,124.2 1076.3,125.1" fill="#f5f000" stroke="#8a8a50" stroke-width="0.6"/>
<text x="1079" y="142" font-family="Liberation Sans" font-weight="bold" font-size="14" fill="#111" letter-spacing="0">xx</text><path d="M1072,148 L1079,142 H1096" fill="none" stroke="#111" stroke-width="1.6"/><polygon points="1070.5,149.5 1071,143.5 1076,147" fill="#111"/>
<circle cx="1118" cy="129" r="3" fill="#6a6a78"/><path d="M1113,133 H1123 L1127,143 L1124,144 L1121,137 V150 H1119 V144 H1117 V150 H1115 V137 L1112,144 L1109,143 Z" fill="#6a6a78"/>
<rect x="1119.8" y="123.8" width="13.5" height="9.5" fill="#ececec" stroke="#707070" stroke-width="1.5"/><rect x="1120.5" y="124.5" width="12.0" height="3" fill="#3a4fd0"/><rect x="1121.0" y="125.0" width="2.5" height="2" fill="#ddd"/>
<polygon points="1111.0,121.5 1112.7,126.1 1117.5,125.2 1114.4,129.0 1117.5,132.8 1112.7,131.9 1111.0,136.5 1109.3,131.9 1104.5,132.8 1107.6,129.0 1104.5,125.2 1109.3,126.1" fill="#f5f000" stroke="#8a8a50" stroke-width="0.6"/>
<rect x="1143" y="133" width="24" height="17" fill="#fff" stroke="#666" stroke-width="1.6"/><path d="M1155,130 V139 A2.5,2.5 0 0 0 1160,139 V133" fill="none" stroke="#333" stroke-width="1.4"/>
<rect x="1155.8" y="123.8" width="13.5" height="8.5" fill="#ececec" stroke="#707070" stroke-width="1.5"/><rect x="1156.5" y="124.5" width="12.0" height="3" fill="#3a4fd0"/><rect x="1157.0" y="125.0" width="2.5" height="2" fill="#ddd"/>
<polygon points="1147.0,122.5 1148.7,127.1 1153.5,126.2 1150.4,130.0 1153.5,133.8 1148.7,132.9 1147.0,137.5 1145.3,132.9 1140.5,133.8 1143.6,130.0 1140.5,126.2 1145.3,127.1" fill="#f5f000" stroke="#8a8a50" stroke-width="0.6"/>
<line x1="1176.0" y1="117.0" x2="1176.0" y2="157.0" stroke="#dedede" stroke-width="1"/>
<rect x="1179.5" y="121.0" width="1.6" height="1.6" fill="#8a8a8a"/><rect x="1179.5" y="124.6" width="1.6" height="1.6" fill="#8a8a8a"/><rect x="1179.5" y="128.2" width="1.6" height="1.6" fill="#8a8a8a"/><rect x="1179.5" y="131.8" width="1.6" height="1.6" fill="#8a8a8a"/><rect x="1179.5" y="135.4" width="1.6" height="1.6" fill="#8a8a8a"/><rect x="1179.5" y="139.0" width="1.6" height="1.6" fill="#8a8a8a"/><rect x="1179.5" y="142.6" width="1.6" height="1.6" fill="#8a8a8a"/><rect x="1179.5" y="146.2" width="1.6" height="1.6" fill="#8a8a8a"/><rect x="1179.5" y="149.8" width="1.6" height="1.6" fill="#8a8a8a"/><rect x="1179.5" y="153.4" width="1.6" height="1.6" fill="#8a8a8a"/>
<path d="M1195,140 L1201,134 L1208,141 L1205,150 H1199 Z" fill="#555"/><path d="M1195,137 L1200,131 M1198,135 L1203,129 M1201,137 L1206,131" stroke="#555" stroke-width="2.5" stroke-linecap="round"/><circle cx="1212" cy="139" r="5" fill="#f7f7f7" stroke="#555" stroke-width="2"/><path d="M1215.5,142.5 L1220,147" stroke="#555" stroke-width="2.4"/><path d="M1211,124 V135 M1205,129.5 H1217" stroke="#555" stroke-width="1.6"/><polygon points="1211,122 1208.5,125 1213.5,125" fill="#555"/><polygon points="1219,129.5 1216,127 1216,132" fill="#555"/><polygon points="1203,129.5 1206,127 1206,132" fill="#555"/>
<circle cx="1240" cy="133" r="6.5" fill="none" stroke="#555" stroke-width="3"/><path d="M1245,138 L1254.5,148" stroke="#555" stroke-width="3"/><path d="M1244,124.5 L1253,133.5 M1253,124.5 L1244,133.5" stroke="#f01010" stroke-width="3.2" stroke-linecap="round"/>
<polygon points="1266.0,131.5 1273.0,124.5 1290.0,124.5 1290.0,141.5 1283.0,148.5 1266.0,148.5" fill="#c7cde3" stroke="#5a6aa0" stroke-width="1.4"/><path d="M1266.0,131.5 H1283.0 L1290.0,124.5 M1283.0,131.5 V148.5 M1273.0,124.5 V141.5 H1290.0 M1273.0,141.5 L1266.0,148.5" fill="none" stroke="#5a6aa0" stroke-width="1" opacity="0.8"/>
<polygon points="1305.0,133.0 1311.0,127.0 1326.0,127.0 1326.0,144.0 1320.0,150.0 1305.0,150.0" fill="#c7cde3" stroke="#5a6aa0" stroke-width="1.4"/><path d="M1305.0,133.0 H1320.0 L1326.0,127.0 M1320.0,133.0 V150.0 M1311.0,127.0 V144.0 H1326.0 M1311.0,144.0 L1305.0,150.0" fill="none" stroke="#5a6aa0" stroke-width="1" opacity="0.8"/>
<path d="M1316,138 L1324,126" stroke="#f0b020" stroke-width="3.5"/><path d="M1322,128.5 L1326,123" stroke="#e8a0d0" stroke-width="3.5"/><polygon points="1314.5,140.5 1314.5,136 1318,138" fill="#c02020"/>
<polygon points="1337,140 1346,131 1346,124 1353,124 1363.5,124 1363.5,133 1354,148 1337,148" fill="#dde1ee" stroke="#5a6aa0" stroke-width="1.4"/><rect x="1354" y="124" width="9.5" height="9" fill="#aab3d3" stroke="#5a6aa0" stroke-width="1"/><path d="M1337,140 H1354 V148 M1346,131 H1354 V140" fill="none" stroke="#5a6aa0" stroke-width="1"/>
<path d="M1384,131.6 L1388,135 L1384,138.4 M1389.5,131.6 L1393.5,135 L1389.5,138.4" fill="none" stroke="#222" stroke-width="1.5"/>
<rect x="431.5" y="170.5" width="8" height="7" fill="#d9e6f3" stroke="#333" stroke-width="2"/><path d="M434.5,170 V167 H443 V174.5 H440" fill="none" stroke="#333" stroke-width="2"/>
<path d="M462,168.5 L472.5,179 M472.5,168.5 L462,179" stroke="#333" stroke-width="2.6"/>
<rect x="12" y="201" width="22" height="20" fill="#c4c4c4" stroke="#a8a8a8" stroke-width="1"/><rect x="13" y="202" width="20" height="3" fill="#999"/><path d="M15,208 H31 M15,211.5 H31 M15,215 H31 M18,206 V219 M24,206 V219" stroke="#eee" stroke-width="1"/><path d="M14,219 Q22,213 32,215" stroke="#888" stroke-width="1.4" fill="none"/>
<path d="M414.0,208.5 L419.5,213.5 L425.0,208.5" fill="none" stroke="#bbb" stroke-width="1.5"/>
<polygon points="447,205.5 447,216.5 440.5,211" fill="#666"/><polygon points="464.5,205.5 464.5,216.5 471,211" fill="#666"/>
<path d="M14,250.5 L19.5,256 L25,250.5" fill="none" stroke="#333" stroke-width="1.5"/>
<rect x="37.5" y="244.5" width="17" height="17" fill="#fff" stroke="#333" stroke-width="2"/><path d="M40.5,253.0 L44.5,257.0 L52.0,248.5" fill="none" stroke="#222" stroke-width="1.7"/>
<path d="M67.0,247.0 Q60.0,253.8 67.0,260.7 M80.5,247.0 Q87.5,253.8 80.5,260.7 M67.0,248.0 Q73.8,255.0 80.5,248.0" fill="none" stroke="#444" stroke-width="0.8"/><path d="M67.0,260.7 V247.0 H80.5 V260.7" fill="none" stroke="#111" stroke-width="2"/><circle cx="67.0" cy="247.0" r="1.8" fill="#d80a0a"/><circle cx="80.5" cy="247.0" r="1.8" fill="#d80a0a"/><circle cx="67.0" cy="260.7" r="1.8" fill="#d80a0a"/><circle cx="80.5" cy="260.7" r="1.8" fill="#d80a0a"/>
<circle cx="75.9" cy="280.5" r="8.8" fill="#fff" stroke="#333" stroke-width="1.6"/><circle cx="75.9" cy="280.5" r="4.5" fill="#333"/>
<path d="M97.0,274.0 Q90.0,280.9 97.0,287.7 M110.5,274.0 Q117.5,280.9 110.5,287.7 M97.0,275.0 Q103.8,282.0 110.5,275.0" fill="none" stroke="#444" stroke-width="0.8"/><path d="M97.0,287.7 V274.0 H110.5 V287.7" fill="none" stroke="#111" stroke-width="2"/><circle cx="97.0" cy="274.0" r="1.8" fill="#d80a0a"/><circle cx="110.5" cy="274.0" r="1.8" fill="#d80a0a"/><circle cx="97.0" cy="287.7" r="1.8" fill="#d80a0a"/><circle cx="110.5" cy="287.7" r="1.8" fill="#d80a0a"/>
<circle cx="75.9" cy="307.5" r="8.8" fill="#fff" stroke="#333" stroke-width="1.6"/>
<path d="M97.0,301.0 Q90.0,307.9 97.0,314.7 M110.5,301.0 Q117.5,307.9 110.5,314.7 M97.0,302.0 Q103.8,309.0 110.5,302.0" fill="none" stroke="#444" stroke-width="0.8"/><path d="M97.0,314.7 V301.0 H110.5 V314.7" fill="none" stroke="#111" stroke-width="2"/><circle cx="97.0" cy="301.0" r="1.8" fill="#d80a0a"/><circle cx="110.5" cy="301.0" r="1.8" fill="#d80a0a"/><circle cx="97.0" cy="314.7" r="1.8" fill="#d80a0a"/><circle cx="110.5" cy="314.7" r="1.8" fill="#d80a0a"/>
<circle cx="75.9" cy="334.5" r="8.8" fill="#fff" stroke="#333" stroke-width="1.6"/>
<path d="M97.0,328.0 Q90.0,334.9 97.0,341.7 M110.5,328.0 Q117.5,334.9 110.5,341.7 M97.0,329.0 Q103.8,336.0 110.5,329.0" fill="none" stroke="#444" stroke-width="0.8"/><path d="M97.0,341.7 V328.0 H110.5 V341.7" fill="none" stroke="#111" stroke-width="2"/><circle cx="97.0" cy="328.0" r="1.8" fill="#d80a0a"/><circle cx="110.5" cy="328.0" r="1.8" fill="#d80a0a"/><circle cx="97.0" cy="341.7" r="1.8" fill="#d80a0a"/><circle cx="110.5" cy="341.7" r="1.8" fill="#d80a0a"/>
<circle cx="75.9" cy="361.5" r="8.8" fill="#fff" stroke="#333" stroke-width="1.6"/>
<path d="M97.0,355.0 Q90.0,361.9 97.0,368.7 M110.5,355.0 Q117.5,361.9 110.5,368.7 M97.0,356.0 Q103.8,363.0 110.5,356.0" fill="none" stroke="#444" stroke-width="0.8"/><path d="M97.0,368.7 V355.0 H110.5 V368.7" fill="none" stroke="#111" stroke-width="2"/><circle cx="97.0" cy="355.0" r="1.8" fill="#d80a0a"/><circle cx="110.5" cy="355.0" r="1.8" fill="#d80a0a"/><circle cx="97.0" cy="368.7" r="1.8" fill="#d80a0a"/><circle cx="110.5" cy="368.7" r="1.8" fill="#d80a0a"/>
<circle cx="75.9" cy="388.5" r="8.8" fill="#fff" stroke="#333" stroke-width="1.6"/>
<path d="M97.0,382.0 Q90.0,388.9 97.0,395.7 M110.5,382.0 Q117.5,388.9 110.5,395.7 M97.0,383.0 Q103.8,390.0 110.5,383.0" fill="none" stroke="#444" stroke-width="0.8"/><path d="M97.0,395.7 V382.0 H110.5 V395.7" fill="none" stroke="#111" stroke-width="2"/><circle cx="97.0" cy="382.0" r="1.8" fill="#d80a0a"/><circle cx="110.5" cy="382.0" r="1.8" fill="#d80a0a"/><circle cx="97.0" cy="395.7" r="1.8" fill="#d80a0a"/><circle cx="110.5" cy="395.7" r="1.8" fill="#d80a0a"/>
<circle cx="75.9" cy="415.5" r="8.8" fill="#fff" stroke="#333" stroke-width="1.6"/>
<path d="M97.0,409.0 Q90.0,415.9 97.0,422.7 M110.5,409.0 Q117.5,415.9 110.5,422.7 M97.0,410.0 Q103.8,417.0 110.5,410.0" fill="none" stroke="#444" stroke-width="0.8"/><path d="M97.0,422.7 V409.0 H110.5 V422.7" fill="none" stroke="#111" stroke-width="2"/><circle cx="97.0" cy="409.0" r="1.8" fill="#d80a0a"/><circle cx="110.5" cy="409.0" r="1.8" fill="#d80a0a"/><circle cx="97.0" cy="422.7" r="1.8" fill="#d80a0a"/><circle cx="110.5" cy="422.7" r="1.8" fill="#d80a0a"/>
<circle cx="75.9" cy="442.5" r="8.8" fill="#fff" stroke="#333" stroke-width="1.6"/>
<path d="M97.0,436.0 Q90.0,442.9 97.0,449.7 M110.5,436.0 Q117.5,442.9 110.5,449.7 M97.0,437.0 Q103.8,444.0 110.5,437.0" fill="none" stroke="#444" stroke-width="0.8"/><path d="M97.0,449.7 V436.0 H110.5 V449.7" fill="none" stroke="#111" stroke-width="2"/><circle cx="97.0" cy="436.0" r="1.8" fill="#d80a0a"/><circle cx="110.5" cy="436.0" r="1.8" fill="#d80a0a"/><circle cx="97.0" cy="449.7" r="1.8" fill="#d80a0a"/><circle cx="110.5" cy="449.7" r="1.8" fill="#d80a0a"/>
<path d="M17.0,465.0 L22.0,470.0 L17.0,475.0" fill="none" stroke="#777" stroke-width="1.5"/>
<rect x="37.5" y="460.5" width="17" height="17" fill="#fff" stroke="#333" stroke-width="2"/>
<path d="M17.0,492.0 L22.0,497.0 L17.0,502.0" fill="none" stroke="#777" stroke-width="1.5"/>
<rect x="37.5" y="487.5" width="17" height="17" fill="#fff" stroke="#333" stroke-width="2"/>
<path d="M17.0,519.0 L22.0,524.0 L17.0,529.0" fill="none" stroke="#777" stroke-width="1.5"/>
<rect x="37.5" y="514.5" width="17" height="17" fill="#fff" stroke="#333" stroke-width="2"/>
<path d="M68,472.4 Q74,486 80.1,472.4 Z" fill="#c8c8f8" stroke="#1a1aff" stroke-width="1.5"/>
<rect x="64.7" y="470" width="18.3" height="2" fill="#9cc4ea"/>
<polygon points="63,471.5 63.5,461.5 67.5,471" fill="#ff1010"/><polygon points="84.5,471.5 84,461.5 80.5,471" fill="#ff1010"/>
<circle cx="63.1" cy="471.6" r="1.8" fill="#c01010"/><circle cx="84.6" cy="471.6" r="1.8" fill="#c01010"/>
<polygon points="64.3,496.7 70.8,491.4 76.9,495.1 71.2,497.5" fill="#3cc85a" stroke="#2a6a3a" stroke-width="0.8"/>
<circle cx="70.8" cy="489.4" r="3.1" fill="#1a7a3a"/>
<polygon points="70.4,500 74,503.8 72.2,503.8 72.2,508.4 68.6,508.4 68.6,503.8 66.8,503.8" fill="#50e070" stroke="#2a6a3a" stroke-width="0.8"/>
<polygon points="77,489.4 81,485.8 81,487.7 85.8,487.7 85.8,491.2 81,491.2 81,493" fill="#50e070" stroke="#2a6a3a" stroke-width="0.8"/>
<path d="M67.0,517.0 Q60.0,523.9 67.0,530.7 M80.5,517.0 Q87.5,523.9 80.5,530.7 M67.0,518.0 Q73.8,525.0 80.5,518.0" fill="none" stroke="#444" stroke-width="0.8"/><path d="M67.0,530.7 V517.0 H80.5 V530.7" fill="none" stroke="#111" stroke-width="2"/><circle cx="67.0" cy="517.0" r="1.8" fill="#d80a0a"/><circle cx="80.5" cy="517.0" r="1.8" fill="#d80a0a"/><circle cx="67.0" cy="530.7" r="1.8" fill="#d80a0a"/><circle cx="80.5" cy="530.7" r="1.8" fill="#d80a0a"/>
<path d="M17.0,750.0 L22.0,755.0 L17.0,760.0" fill="none" stroke="#777" stroke-width="1.5"/>
<rect x="37.5" y="745.0" width="17" height="17" fill="#fff" stroke="#333" stroke-width="2"/>
<polygon points="62.0,763.0 72.0,759.0 62.0,759.0" fill="#2f4fc0"/><polygon points="86.0,752.0 74.0,757.5 86.0,757.5" fill="#d42a1a"/><line x1="62.0" y1="758.5" x2="86.0" y2="757.0" stroke="#222" stroke-width="2"/>
<text x="62.5" y="749.2" font-family="Liberation Sans" font-weight="bold" font-size="10.5" fill="#222" letter-spacing="0.5">x.xx</text>
<rect x="37.5" y="772.0" width="17" height="17" fill="#fff" stroke="#333" stroke-width="2"/><path d="M40.5,780.5 L44.5,784.5 L52.0,776.0" fill="none" stroke="#222" stroke-width="1.7"/>
<polygon points="62.0,790.0 72.0,786.0 62.0,786.0" fill="#2f4fc0"/><polygon points="86.0,779.0 74.0,784.5 86.0,784.5" fill="#d42a1a"/><line x1="62.0" y1="785.5" x2="86.0" y2="784.0" stroke="#222" stroke-width="2"/>
<ellipse cx="78.0" cy="773.5" rx="6.6" ry="4.4" fill="#fff" stroke="#1c1c5a" stroke-width="1.7"/><circle cx="78.0" cy="773.5" r="2.8" fill="#3a6ad8"/><circle cx="78.0" cy="773.5" r="1.1" fill="#111"/>
<rect x="37.5" y="799.0" width="17" height="17" fill="#fff" stroke="#333" stroke-width="2"/><path d="M40.5,807.5 L44.5,811.5 L52.0,803.0" fill="none" stroke="#222" stroke-width="1.7"/>
<polygon points="62.0,817.0 72.0,813.0 62.0,813.0" fill="#2f4fc0"/><polygon points="86.0,806.0 74.0,811.5 86.0,811.5" fill="#d42a1a"/><line x1="62.0" y1="812.5" x2="86.0" y2="811.0" stroke="#222" stroke-width="2"/>
<ellipse cx="78.0" cy="800.5" rx="6.6" ry="4.4" fill="#fff" stroke="#1c1c5a" stroke-width="1.7"/><circle cx="78.0" cy="800.5" r="2.8" fill="#3a6ad8"/><circle cx="78.0" cy="800.5" r="1.1" fill="#111"/>
<path d="M17.0,831.0 L22.0,836.0 L17.0,841.0" fill="none" stroke="#777" stroke-width="1.5"/>
<rect x="37.5" y="826.0" width="17" height="17" fill="#d4e6f8" stroke="#2a6aa8" stroke-width="2"/>
<polygon points="62.0,844.0 72.0,840.0 62.0,840.0" fill="#2f4fc0"/><polygon points="86.0,833.0 74.0,838.5 86.0,838.5" fill="#d42a1a"/><line x1="62.0" y1="839.5" x2="86.0" y2="838.0" stroke="#222" stroke-width="2"/>
<ellipse cx="78.0" cy="827.5" rx="6.6" ry="4.4" fill="#fff" stroke="#1c1c5a" stroke-width="1.7"/><circle cx="78.0" cy="827.5" r="2.8" fill="#3a6ad8"/><circle cx="78.0" cy="827.5" r="1.1" fill="#111"/>
<path d="M17.0,858.0 L22.0,863.0 L17.0,868.0" fill="none" stroke="#777" stroke-width="1.5"/>
<rect x="37.5" y="853.0" width="17" height="17" fill="#d4e6f8" stroke="#2a6aa8" stroke-width="2"/>
<polygon points="62.0,871.0 72.0,867.0 62.0,867.0" fill="#2f4fc0"/><polygon points="86.0,860.0 74.0,865.5 86.0,865.5" fill="#d42a1a"/><line x1="62.0" y1="866.5" x2="86.0" y2="865.0" stroke="#222" stroke-width="2"/>
<ellipse cx="78.0" cy="854.5" rx="6.6" ry="4.4" fill="#fff" stroke="#1c1c5a" stroke-width="1.7"/><circle cx="78.0" cy="854.5" r="2.8" fill="#3a6ad8"/><circle cx="78.0" cy="854.5" r="1.1" fill="#111"/>
<path d="M17.0,885.0 L22.0,890.0 L17.0,895.0" fill="none" stroke="#777" stroke-width="1.5"/>
<rect x="37.5" y="880.0" width="17" height="17" fill="#d4e6f8" stroke="#2a6aa8" stroke-width="2"/>
<polygon points="62.0,898.0 72.0,894.0 62.0,894.0" fill="#2f4fc0"/><polygon points="86.0,887.0 74.0,892.5 86.0,892.5" fill="#d42a1a"/><line x1="62.0" y1="893.5" x2="86.0" y2="892.0" stroke="#222" stroke-width="2"/>
<ellipse cx="78.0" cy="881.5" rx="6.6" ry="4.4" fill="#fff" stroke="#1c1c5a" stroke-width="1.7"/><circle cx="78.0" cy="881.5" r="2.8" fill="#3a6ad8"/><circle cx="78.0" cy="881.5" r="1.1" fill="#111"/>
<path d="M17.0,912.0 L22.0,917.0 L17.0,922.0" fill="none" stroke="#777" stroke-width="1.5"/>
<rect x="37.5" y="907.0" width="17" height="17" fill="#d4e6f8" stroke="#2a6aa8" stroke-width="2"/>
<polygon points="62.0,925.0 72.0,921.0 62.0,921.0" fill="#2f4fc0"/><polygon points="86.0,914.0 74.0,919.5 86.0,919.5" fill="#d42a1a"/><line x1="62.0" y1="920.5" x2="86.0" y2="919.0" stroke="#222" stroke-width="2"/>
<ellipse cx="78.0" cy="908.5" rx="6.6" ry="4.4" fill="#fff" stroke="#1c1c5a" stroke-width="1.7"/><circle cx="78.0" cy="908.5" r="2.8" fill="#3a6ad8"/><circle cx="78.0" cy="908.5" r="1.1" fill="#111"/>
<path d="M17.0,939.0 L22.0,944.0 L17.0,949.0" fill="none" stroke="#777" stroke-width="1.5"/>
<rect x="37.5" y="934.0" width="17" height="17" fill="#d4e6f8" stroke="#2a6aa8" stroke-width="2"/>
<polygon points="62.0,952.0 72.0,948.0 62.0,948.0" fill="#2f4fc0"/><polygon points="86.0,941.0 74.0,946.5 86.0,946.5" fill="#d42a1a"/><line x1="62.0" y1="947.5" x2="86.0" y2="946.0" stroke="#222" stroke-width="2"/>
<ellipse cx="78.0" cy="935.5" rx="6.6" ry="4.4" fill="#fff" stroke="#1c1c5a" stroke-width="1.7"/><circle cx="78.0" cy="935.5" r="2.8" fill="#3a6ad8"/><circle cx="78.0" cy="935.5" r="1.1" fill="#111"/>
<path d="M17.0,966.0 L22.0,971.0 L17.0,976.0" fill="none" stroke="#777" stroke-width="1.5"/>
<rect x="37.5" y="961.0" width="17" height="17" fill="#d4e6f8" stroke="#2a6aa8" stroke-width="2"/>
<polygon points="62.0,979.0 72.0,975.0 62.0,975.0" fill="#2f4fc0"/><polygon points="86.0,968.0 74.0,973.5 86.0,973.5" fill="#d42a1a"/><line x1="62.0" y1="974.5" x2="86.0" y2="973.0" stroke="#222" stroke-width="2"/>
<ellipse cx="78.0" cy="962.5" rx="6.6" ry="4.4" fill="#fff" stroke="#1c1c5a" stroke-width="1.7"/><circle cx="78.0" cy="962.5" r="2.8" fill="#3a6ad8"/><circle cx="78.0" cy="962.5" r="1.1" fill="#111"/>
<path d="M16,998 H22 L24,996 H36 V1012 H16 Z" fill="#f0c840" stroke="#a08020" stroke-width="1"/><rect x="22.5" y="992.5" width="16" height="11" fill="#fff" stroke="#777" stroke-width="1"/><rect x="23" y="993" width="15" height="2.5" fill="#3a6ad0"/><path d="M24,1010 Q30,1000 37,1004 L36,1012 Z" fill="#4a80d8" stroke="#2a50a0" stroke-width="0.8"/><circle cx="24" cy="1010" r="1.3" fill="#e02020"/><circle cx="31" cy="1014" r="1.3" fill="#e02020"/>
<ellipse cx="73.5" cy="1003.5" rx="7.4" ry="4.8" fill="#fff" stroke="#1c1c5a" stroke-width="1.9"/><circle cx="73.5" cy="1003.5" r="3.0" fill="#3a6ad8"/><circle cx="73.5" cy="1003.5" r="1.3" fill="#111"/>
<rect x="110" y="997" width="15" height="13" rx="2" fill="#666"/><polygon points="124,1003.5 132,998 132,1009" fill="#666"/>
<polygon points="157.0,1013.0 167.0,1009.0 157.0,1009.0" fill="#2f4fc0"/><polygon points="181.0,1002.0 169.0,1007.5 181.0,1007.5" fill="#d42a1a"/><line x1="157.0" y1="1008.5" x2="181.0" y2="1007.0" stroke="#222" stroke-width="2"/>
<line x1="484.6" y1="1026.0" x2="484.6" y2="1046.0" stroke="#c8c8d0" stroke-width="1"/>
<line x1="641.7" y1="1026.0" x2="641.7" y2="1046.0" stroke="#c8c8d0" stroke-width="1"/>
<line x1="947.5" y1="1026.0" x2="947.5" y2="1046.0" stroke="#c8c8d0" stroke-width="1"/>
<line x1="1043.5" y1="1026.0" x2="1043.5" y2="1046.0" stroke="#c8c8d0" stroke-width="1"/>
<line x1="1154.2" y1="1026.0" x2="1154.2" y2="1046.0" stroke="#c8c8d0" stroke-width="1"/>
<line x1="1265.7" y1="1026.0" x2="1265.7" y2="1046.0" stroke="#c8c8d0" stroke-width="1"/>
<line x1="1376.5" y1="1026.0" x2="1376.5" y2="1046.0" stroke="#c8c8d0" stroke-width="1"/>
<g fill="#aaa"><rect x="1386" y="1035" width="2" height="2"/><rect x="1390" y="1031" width="2" height="2"/><rect x="1390" y="1035" width="2" height="2"/><rect x="1382" y="1039" width="2" height="2"/><rect x="1386" y="1039" width="2" height="2"/><rect x="1390" y="1039" width="2" height="2"/></g></svg>
<div class="t" id="ttl" style="left:46px;top:14.21px;font-size:17px;color:#1b1b1b;font-weight:normal;letter-spacing:0.250px;">Dlubal RFEM | 6.11.0004 | Enu 2_1 Consideration of subsoil bearing capacity.rf6*</div>
<div class="t" id="m0" style="left:34.3px;top:52.50px;font-size:15px;color:#111;font-weight:normal;letter-spacing:-0.066px;">File</div>
<div class="t" id="m1" style="left:74.7px;top:52.50px;font-size:15px;color:#111;font-weight:normal;letter-spacing:-0.067px;">Edit</div>
<div class="t" id="m2" style="left:116.6px;top:52.50px;font-size:15px;color:#111;font-weight:normal;letter-spacing:-0.066px;">View</div>
<div class="t" id="m3" style="left:166.3px;top:52.50px;font-size:15px;color:#111;font-weight:normal;letter-spacing:0.320px;">Insert</div>
<div class="t" id="m4" style="left:221px;top:52.50px;font-size:15px;color:#111;font-weight:normal;letter-spacing:0.120px;">Assign</div>
<div class="t" id="m5" style="left:282.8px;top:52.50px;font-size:15px;color:#111;font-weight:normal;letter-spacing:0.075px;">Calculate</div>
<div class="t" id="m6" style="left:362.4px;top:52.50px;font-size:15px;color:#111;font-weight:normal;letter-spacing:0.000px;">Results</div>
<div class="t" id="m7" style="left:428.5px;top:52.50px;font-size:15px;color:#111;font-weight:normal;letter-spacing:0.050px;">Tools</div>
<div class="t" id="srch" style="left:537px;top:53.08px;font-size:15.5px;color:#7a7a7a;font-weight:normal;letter-spacing:0.048px;">Type a keyword (Alt+Q)</div>
<div class="t" id="cb1" style="left:467.5px;top:129.80px;font-size:15px;color:#111;font-weight:normal;letter-spacing:0.000px;">1 - Global XYZ</div>
<div class="t" id="qs" style="left:960.5px;top:89.03px;font-size:14.5px;color:#111;font-weight:normal;letter-spacing:-0.500px;">Qs</div>
<div class="t" id="lc4" style="left:1001px;top:89.03px;font-size:14.5px;color:#111;font-weight:normal;letter-spacing:-0.700px;">LC4</div>
<div class="t" id="cdots" style="left:1049.5px;top:89.03px;font-size:14.5px;color:#111;font-weight:normal;letter-spacing:-1.033px;">C...</div>
<div class="t" id="navh" style="left:10.7px;top:166.51px;font-size:17px;color:#333;font-weight:bold;letter-spacing:0.512px;">Navigator - Results</div>
<div class="t" id="stat" style="left:42.7px;top:204.00px;font-size:15px;color:#8a8a8a;font-weight:normal;letter-spacing:0.158px;">Static Analysis</div>
<div class="t" id="r0" style="left:94.6px;top:247.78px;font-size:15.5px;color:#111;font-weight:normal;letter-spacing:0.144px;">Global Deformations</div>
<div class="t" id="r1" style="left:124.1px;top:274.78px;font-size:15.5px;color:#111;font-weight:normal;letter-spacing:0.000px;">|u|</div>
<div class="t" id="r2" style="left:124.1px;top:301.78px;font-size:15.5px;color:#111;font-weight:normal;letter-spacing:0.000px;">uX</div>
<div class="t" id="r3" style="left:124.1px;top:328.78px;font-size:15.5px;color:#111;font-weight:normal;letter-spacing:0.000px;">uY</div>
<div class="t" id="r4" style="left:124.1px;top:355.78px;font-size:15.5px;color:#111;font-weight:normal;letter-spacing:0.000px;">uZ</div>
<div class="t" id="r5" style="left:124.1px;top:382.78px;font-size:15.5px;color:#111;font-weight:normal;letter-spacing:0.000px;">&phi;X</div>
<div class="t" id="r6" style="left:124.1px;top:409.78px;font-size:15.5px;color:#111;font-weight:normal;letter-spacing:0.000px;">&phi;Y</div>
<div class="t" id="r7" style="left:124.1px;top:436.78px;font-size:15.5px;color:#111;font-weight:normal;letter-spacing:0.000px;">&phi;Z</div>
<div class="t" id="r8" style="left:94.6px;top:463.78px;font-size:15.5px;color:#111;font-weight:normal;letter-spacing:0.100px;">Members</div>
<div class="t" id="r9" style="left:94.6px;top:490.78px;font-size:15.5px;color:#111;font-weight:normal;letter-spacing:-0.088px;">Support Reactions</div>
<div class="t" id="r10" style="left:94.6px;top:517.78px;font-size:15.5px;color:#111;font-weight:normal;letter-spacing:0.170px;">Distribution of Loads</div>
<div class="t" id="q0" style="left:94.8px;top:748.38px;font-size:15.5px;color:#111;font-weight:normal;letter-spacing:-0.167px;">Result Values</div>
<div class="t" id="q1" style="left:94.8px;top:775.38px;font-size:15.5px;color:#111;font-weight:normal;letter-spacing:0.224px;">Title Information</div>
<div class="t" id="q2" style="left:94.8px;top:802.38px;font-size:15.5px;color:#111;font-weight:normal;letter-spacing:0.444px;">Max/Min Information</div>
<div class="t" id="q3" style="left:94.8px;top:829.38px;font-size:15.5px;color:#111;font-weight:normal;letter-spacing:0.360px;">Deformation</div>
<div class="t" id="q4" style="left:94.8px;top:856.38px;font-size:15.5px;color:#111;font-weight:normal;letter-spacing:-0.250px;">Lines</div>
<div class="t" id="q5" style="left:94.8px;top:883.38px;font-size:15.5px;color:#111;font-weight:normal;letter-spacing:0.267px;">Members</div>
<div class="t" id="q6" style="left:94.8px;top:910.38px;font-size:15.5px;color:#111;font-weight:normal;letter-spacing:-0.343px;">Surfaces</div>
<div class="t" id="q7" style="left:94.8px;top:937.38px;font-size:15.5px;color:#111;font-weight:normal;letter-spacing:0.000px;">Solids</div>
<div class="t" id="q8" style="left:94.8px;top:964.38px;font-size:15.5px;color:#111;font-weight:normal;letter-spacing:-0.259px;">Values on Surfaces</div>
<div class="t" id="v0" style="left:495.4px;top:168.34px;font-size:17.2px;color:#111;font-weight:normal;letter-spacing:0.414px;">Visibility mode</div>
<div class="t" id="v1" style="left:495.4px;top:195.24px;font-size:17.2px;color:#111;font-weight:normal;letter-spacing:-0.294px;">LC4 - Case (iii)</div>
<div class="t" id="v2" style="left:495.4px;top:222.14px;font-size:17.2px;color:#111;font-weight:normal;letter-spacing:0.058px;">Static Analysis</div>
<div class="t" id="v3" style="left:495.4px;top:249.04px;font-size:17.2px;color:#111;font-weight:normal;letter-spacing:0.266px;">Displacements |u| [mm]</div>
<div class="t" id="maxmin" style="left:495px;top:997.44px;font-size:17.2px;color:#111;font-weight:normal;letter-spacing:0.180px;">max |u| : 5.5 | min |u| : 0.6 mm</div>
<div class="t" id="s0" style="left:366.3px;top:1029.20px;font-size:15px;color:#111;font-weight:normal;letter-spacing:0.471px;">Visibility mode</div>
<div class="t" id="s1" style="left:646.3px;top:1029.20px;font-size:15px;color:#111;font-weight:normal;letter-spacing:-0.324px;">CS: Global XYZ</div>
<div class="t" id="s2" style="left:952.8px;top:1029.20px;font-size:15px;color:#111;font-weight:normal;letter-spacing:-0.350px;">Plane: XZ</div>
<div class="t" id="s3" style="left:1047.5px;top:1029.20px;font-size:15px;color:#111;font-weight:normal;letter-spacing:0.134px;">X: 2.140 m</div>
<div class="t" id="s4" style="left:1159.3px;top:1029.20px;font-size:15px;color:#111;font-weight:normal;letter-spacing:0.260px;">Y: -4.000 m</div>
<div class="t" id="s5" style="left:1269.7px;top:1029.20px;font-size:15px;color:#111;font-weight:normal;letter-spacing:0.360px;">Z: -7.204 m</div>
<div class="t" id="axX1" style="left:583px;top:868.65px;font-size:14px;color:#e02020;font-weight:normal;letter-spacing:0.000px;">X</div>
<div class="t" id="axY1" style="left:515px;top:872.15px;font-size:14px;color:#20c020;font-weight:normal;letter-spacing:0.000px;">Y</div>
<div class="t" id="axZ1" style="left:541px;top:910.15px;font-size:14px;color:#2020e0;font-weight:normal;letter-spacing:0.000px;">Z</div>
<div class="t" id="axX2" style="left:590px;top:933.65px;font-size:14px;color:#e02020;font-weight:normal;letter-spacing:0.000px;">X</div>
<div class="t" id="axY2" style="left:520px;top:938.15px;font-size:14px;color:#20c020;font-weight:normal;letter-spacing:0.000px;">Y</div>
<div class="t" id="axZ2" style="left:546px;top:975.15px;font-size:14px;color:#2020e0;font-weight:normal;letter-spacing:0.000px;">Z</div>
</div>
<div id="frame"></div>
</body></html>
